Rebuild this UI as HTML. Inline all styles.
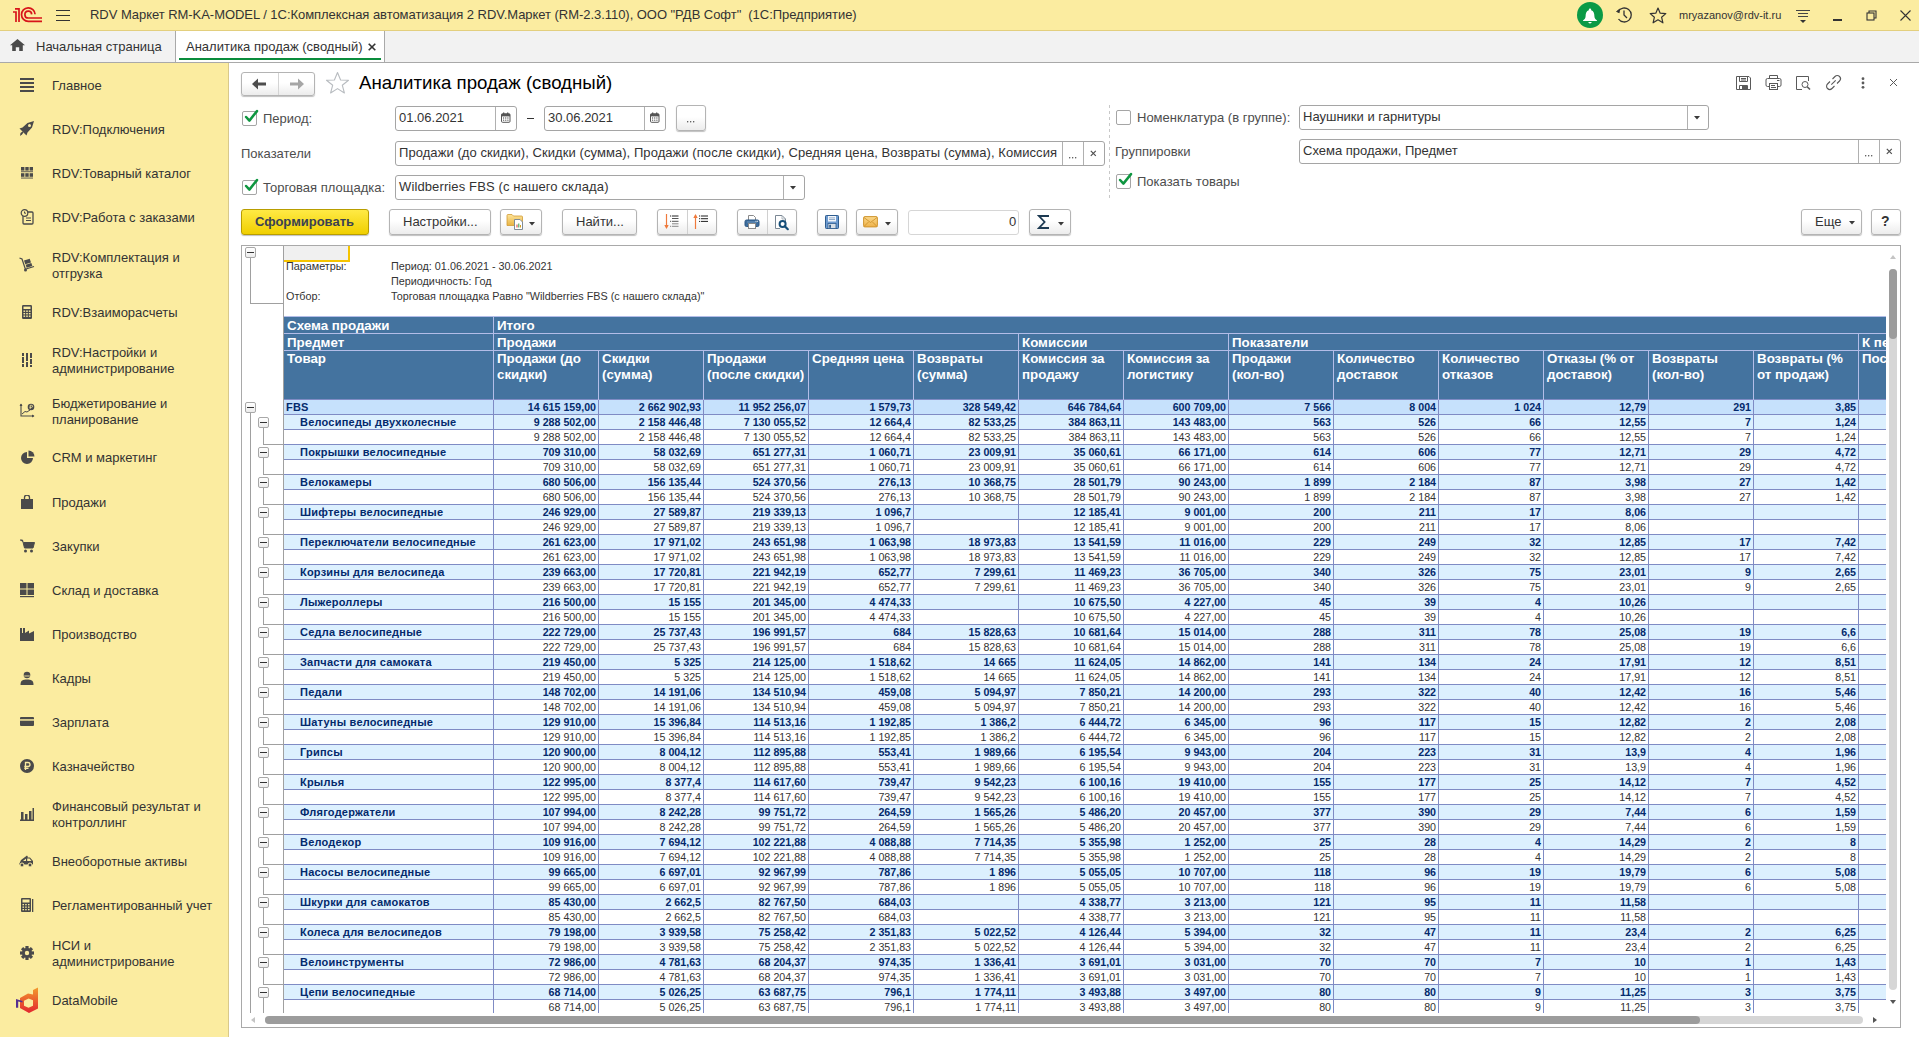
<!DOCTYPE html><html><head><meta charset="utf-8"><style>
*{box-sizing:border-box;margin:0;padding:0}
html,body{width:1919px;height:1037px;overflow:hidden;background:#fff;font-family:"Liberation Sans",sans-serif;color:#333;font-size:13px}
.a{position:absolute}
.t{position:absolute;white-space:pre;line-height:16px}
#titlebar{left:0;top:0;width:1919px;height:31px;background:#fbeca0;border-bottom:1px solid #e3cf7e}
#tabbar{left:0;top:31px;width:1919px;height:32px;background:#f2f2f2;border-bottom:1px solid #a9a9a9}
#sidebar{left:0;top:63px;width:229px;height:974px;background:#fbeca0;border-right:1px solid #d9c98a}
.si{position:absolute;left:52px;font-size:13px;color:#333;line-height:16px;white-space:pre}
.ico{position:absolute}
.fld{position:absolute;border:1px solid #a5a5a5;border-radius:3px;background:#fff}
.btn{position:absolute;border:1px solid #b4b4b4;border-radius:3px;background:linear-gradient(#fff 45%,#ececec);box-shadow:0 1px 1px rgba(0,0,0,.25)}
.cb{position:absolute;width:15px;height:15px;border:1px solid #a5a5a5;border-radius:2px;background:#fff}
.lbl{position:absolute;font-size:13px;color:#4d4d4d;white-space:pre;line-height:16px}
</style></head><body><div id="titlebar" class="a"></div><svg class="a" style="left:0px;top:0px" width="50" height="30" viewBox="0 0 50 30">
<g fill="none" stroke="#d7141a" stroke-width="1.7">
<path d="M13 12 H16 V22"/>
<path d="M15 8.8 H19 V22"/>
<path d="M35.1 14.2 A6.8 6.8 0 1 0 28.3 21.4 H42"/>
<path d="M31.7 14.4 A3.4 3.4 0 1 0 28.3 18 H42"/>
</g></svg><div class="a" style="left:56px;top:10px;width:14px;height:1.4px;background:#333"></div><div class="a" style="left:56px;top:15px;width:14px;height:1.4px;background:#333"></div><div class="a" style="left:56px;top:20px;width:14px;height:1.4px;background:#333"></div><div class="t" style="left:90px;top:7px;font-size:13px;letter-spacing:-0.045px;color:#333">RDV Маркет RM-KA-MODEL / 1С:Комплексная автоматизация 2 RDV.Маркет (RM-2.3.110), ООО "РДВ Софт"  (1С:Предприятие)</div><svg class="a" style="left:1577px;top:2px" width="26" height="26" viewBox="0 0 26 26"><circle cx="13" cy="13" r="13" fill="#0a9a46"/>
<path d="M13 6.5 a1.2 1.2 0 0 1 1.2 1.2 v0.5 c2.5 0.8 3.2 3 3.2 6 c0 2.5 1.6 3.5 2.6 4.2 v0.6 h-14 v-0.6 c1 -0.7 2.6 -1.7 2.6 -4.2 c0 -3 0.7 -5.2 3.2 -6 v-0.5 a1.2 1.2 0 0 1 1.2 -1.2z M11.3 20 h3.4 a1.7 1.5 0 0 1 -3.4 0z" fill="#fff"/></svg><svg class="a" style="left:1615px;top:6px" width="18" height="18" viewBox="0 0 18 18" fill="none" stroke="#333" stroke-width="1.3">
<path d="M3.2 5.5 A7 7 0 1 1 3.5 13"/><path d="M9 4.5 V9 L12 12"/><path d="M1.5 5.5 L4.5 3.2 L4.2 6.8z" fill="#333" stroke-width="0.8"/></svg><svg class="a" style="left:1649px;top:7px" width="18" height="17" viewBox="0 0 18 17"><path d="M9 1 L11.2 6.2 L16.8 6.6 L12.6 10.2 L13.9 15.8 L9 12.8 L4.1 15.8 L5.4 10.2 L1.2 6.6 L6.8 6.2z" fill="none" stroke="#333" stroke-width="1.2" stroke-linejoin="round"/></svg><div class="t" style="left:1679px;top:7px;font-size:11px;color:#333">mryazanov@rdv-it.ru</div><div class="a" style="left:1796px;top:10px;width:14px;height:1px;background:#444"></div><div class="a" style="left:1798px;top:13px;width:10px;height:1px;background:#444"></div><div class="a" style="left:1798px;top:16px;width:10px;height:1px;background:#444"></div><svg class="a" style="left:1800px;top:20px" width="6" height="3" viewBox="0 0 6 3"><path d="M0 0 H6 L3 3z" fill="#333"/></svg><div class="a" style="left:1833px;top:19px;width:9px;height:1.5px;background:#333"></div><svg class="a" style="left:1866px;top:10px" width="11" height="11" viewBox="0 0 11 11" fill="none" stroke="#333" stroke-width="1.1"><rect x="1" y="3" width="7" height="7"/><path d="M3 3 V1 H10 V8 H8"/></svg><svg class="a" style="left:1900px;top:10px" width="11" height="11" viewBox="0 0 11 11" fill="none" stroke="#333" stroke-width="1.1"><path d="M0.5 0.5 L10.5 10.5 M10.5 0.5 L0.5 10.5"/></svg><div id="tabbar" class="a"></div><svg class="a" style="left:10px;top:39px" width="15" height="12" viewBox="0 0 15 12"><path d="M7.5 0 L15 6.3 H12.8 V12 H9.2 V8.3 H5.8 V12 H2.2 V6.3 H0z" fill="#4a4a4a"/></svg><div class="t" style="left:36px;top:39px;font-size:13px;color:#333">Начальная страница</div><div class="a" style="left:175px;top:31px;width:210px;height:31px;background:#fff;border-left:1px solid #a9a9a9;border-right:1px solid #a9a9a9"></div><div class="t" style="left:186px;top:39px;font-size:13px;color:#333">Аналитика продаж (сводный)</div><svg class="a" style="left:368px;top:43px" width="8" height="8" viewBox="0 0 8 8"><path d="M0.7 0.7 L7.3 7.3 M7.3 0.7 L0.7 7.3" stroke="#333" stroke-width="1.6"/></svg><div class="a" style="left:179px;top:58px;width:202px;height:2px;background:#0a8c3c"></div><div id="sidebar" class="a"></div><div class="si" style="top:78px">Главное</div><svg class="a" style="left:20px;top:78px" width="16" height="16" viewBox="0 0 16 16"><rect x="0" y="0" width="14" height="2" fill="#4a4a4a"/><rect x="0" y="4" width="14" height="2" fill="#4a4a4a"/><rect x="0" y="8" width="14" height="2" fill="#4a4a4a"/><rect x="0" y="12" width="14" height="2" fill="#4a4a4a"/></svg><div class="si" style="top:122px">RDV:Подключения</div><svg class="a" style="left:19px;top:121px" width="16" height="16" viewBox="0 0 16 16"><path d="M15 0 L8.5 2 L3.5 6.5 L0.5 7.5 L2.5 9.5 L5.5 12.5 L7.5 14.5 L8.5 11.5 L13 6.5z" fill="#4a4a4a"/><circle cx="10.5" cy="4.5" r="1.5" fill="#fbeca0"/><path d="M1.5 12 L3.5 10.5 L4.5 11.5 L3 13.5 L1 15z" fill="#4a4a4a"/></svg><div class="si" style="top:166px">RDV:Товарный каталог</div><svg class="a" style="left:20px;top:166px" width="16" height="16" viewBox="0 0 16 16"><g fill="#4a4a4a"><rect x="1" y="1" width="3.4" height="3.6"/><rect x="5.3" y="1" width="3.4" height="3.6"/><rect x="9.6" y="1" width="3.4" height="3.6"/><rect x="1" y="5.3" width="12" height="0.9"/><rect x="1" y="7.2" width="3.4" height="3.6"/><rect x="5.3" y="7.2" width="3.4" height="3.6"/><rect x="9.6" y="7.2" width="3.4" height="3.6"/><rect x="1" y="11.6" width="12" height="0.9"/></g></svg><div class="si" style="top:210px">RDV:Работа с заказами</div><svg class="a" style="left:20px;top:209px" width="16" height="16" viewBox="0 0 16 16"><rect x="3" y="3" width="10" height="12" rx="1" fill="none" stroke="#4a4a4a" stroke-width="1.3"/><circle cx="4.5" cy="4" r="3.3" fill="#fbeca0" stroke="#4a4a4a" stroke-width="1.2"/><path d="M4.5 2.5 V4.2 H6" stroke="#4a4a4a" fill="none"/><path d="M6 9 H11 M6 11.5 H11" stroke="#4a4a4a" stroke-width="1"/></svg><div class="si" style="top:250px">RDV:Комплектация и
отгрузка</div><svg class="a" style="left:19px;top:257px" width="16" height="16" viewBox="0 0 16 16"><path d="M0.5 1 L3 2 L6.5 12.5" fill="none" stroke="#4a4a4a" stroke-width="1.2"/><circle cx="6.5" cy="13" r="1.5" fill="#4a4a4a"/><path d="M7 12 L15 9.5" stroke="#4a4a4a" stroke-width="1.3"/><rect x="5.5" y="2.5" width="6" height="4" transform="rotate(-18 8.5 4.5)" fill="#4a4a4a"/><rect x="7" y="6.8" width="6" height="3.2" transform="rotate(-18 10 8.4)" fill="#4a4a4a"/></svg><div class="si" style="top:305px">RDV:Взаиморасчеты</div><svg class="a" style="left:20px;top:305px" width="16" height="16" viewBox="0 0 16 16"><rect x="2" y="0" width="10" height="14" rx="1.2" fill="#4a4a4a"/><rect x="3.5" y="1.6" width="7" height="2.4" fill="#fbeca0"/><g fill="#fbeca0"><rect x="3.5" y="5.5" width="1.6" height="1.4"/><rect x="6.2" y="5.5" width="1.6" height="1.4"/><rect x="8.9" y="5.5" width="1.6" height="1.4"/><rect x="3.5" y="8" width="1.6" height="1.4"/><rect x="6.2" y="8" width="1.6" height="1.4"/><rect x="8.9" y="8" width="1.6" height="1.4"/><rect x="3.5" y="10.5" width="1.6" height="1.4"/><rect x="6.2" y="10.5" width="1.6" height="1.4"/><rect x="8.9" y="10.5" width="1.6" height="1.4"/></g></svg><div class="si" style="top:345px">RDV:Настройки и
администрирование</div><svg class="a" style="left:20px;top:353px" width="16" height="16" viewBox="0 0 16 16"><g fill="#4a4a4a"><rect x="2" y="0" width="2" height="14"/><rect x="6" y="0" width="2" height="14"/><rect x="10" y="0" width="2" height="14"/></g><g fill="#fbeca0"><rect x="2" y="3" width="2" height="1"/><rect x="6" y="8" width="2" height="1"/><rect x="10" y="5" width="2" height="1"/><rect x="2" y="10" width="2" height="1"/><rect x="10" y="11" width="2" height="1"/></g></svg><div class="si" style="top:396px">Бюджетирование и
планирование</div><svg class="a" style="left:19px;top:403px" width="16" height="16" viewBox="0 0 16 16"><path d="M2 1 V13 H15" fill="none" stroke="#4a4a4a" stroke-width="1.1"/><path d="M0.5 3 L2 0.5 L3.5 3z M13 11.5 L15.5 13 L13 14.5z" fill="#4a4a4a"/><path d="M3 11 L6 8.5 L8 9 L11 7" fill="none" stroke="#4a4a4a" stroke-width="1"/><circle cx="12" cy="4" r="3.3" fill="#4a4a4a"/><path d="M11.2 6 V2.3 H12.6 A1 1 0 0 1 12.6 4.3 H10.5" stroke="#fbeca0" stroke-width="0.8" fill="none"/></svg><div class="si" style="top:450px">CRM и маркетинг</div><svg class="a" style="left:20px;top:450px" width="16" height="16" viewBox="0 0 16 16"><path d="M7 2 A6 6 0 1 0 13 8 H7z" fill="#4a4a4a"/><path d="M8.5 0.5 A6 6 0 0 1 14.5 6.5 H8.5z" fill="#4a4a4a"/></svg><div class="si" style="top:495px">Продажи</div><svg class="a" style="left:20px;top:495px" width="16" height="16" viewBox="0 0 16 16"><path d="M1 4 H13 L13 14 H1z" fill="#4a4a4a"/><path d="M4.5 5 V2.5 A2.5 2.5 0 0 1 9.5 2.5 V5" fill="none" stroke="#4a4a4a" stroke-width="1.3"/></svg><div class="si" style="top:539px">Закупки</div><svg class="a" style="left:20px;top:539px" width="16" height="16" viewBox="0 0 16 16"><path d="M0 1 H2.5 L4.5 9 H13 L14.5 3.5 H3.5" fill="#4a4a4a" stroke="#4a4a4a" stroke-width="1"/><circle cx="5.5" cy="12" r="1.5" fill="#4a4a4a"/><circle cx="11.5" cy="12" r="1.5" fill="#4a4a4a"/></svg><div class="si" style="top:583px">Склад и доставка</div><svg class="a" style="left:20px;top:583px" width="16" height="16" viewBox="0 0 16 16"><g fill="#4a4a4a"><rect x="0" y="0" width="6.5" height="5.5"/><rect x="7.5" y="0" width="6.5" height="5.5"/><rect x="0" y="6.5" width="6.5" height="5.5"/><rect x="7.5" y="6.5" width="6.5" height="5.5"/><rect x="0" y="13" width="14" height="1.2"/></g></svg><div class="si" style="top:627px">Производство</div><svg class="a" style="left:20px;top:627px" width="16" height="16" viewBox="0 0 16 16"><path d="M0 14 V1 H2 V6 H3 V1 H5 V6 L9 3.5 V6.5 L14 4 V14z" fill="#4a4a4a"/></svg><div class="si" style="top:671px">Кадры</div><svg class="a" style="left:20px;top:671px" width="16" height="16" viewBox="0 0 16 16"><circle cx="7" cy="4" r="3.3" fill="#4a4a4a"/><path d="M4.2 5 H9.8" stroke="#fbeca0" stroke-width="0.9"/><path d="M0.5 14 C0.5 9 3 8.5 7 8.5 C11 8.5 13.5 9 13.5 14z" fill="#4a4a4a"/></svg><div class="si" style="top:715px">Зарплата</div><svg class="a" style="left:20px;top:715px" width="16" height="16" viewBox="0 0 16 16"><rect x="0" y="2" width="14" height="9" rx="1" fill="#4a4a4a"/><rect x="0" y="4.2" width="14" height="1.5" fill="#fbeca0"/></svg><div class="si" style="top:759px">Казначейство</div><svg class="a" style="left:20px;top:759px" width="16" height="16" viewBox="0 0 16 16"><circle cx="7" cy="7" r="7" fill="#4a4a4a"/><path d="M5.5 11 V3.5 H8 A2 2 0 0 1 8 7.5 H4.3 M4.3 9.3 H8.5" stroke="#fbeca0" stroke-width="1.3" fill="none"/></svg><div class="si" style="top:799px">Финансовый результат и
контроллинг</div><svg class="a" style="left:20px;top:807px" width="16" height="16" viewBox="0 0 16 16"><g fill="#4a4a4a"><rect x="0" y="12.5" width="14" height="1.5"/><rect x="1" y="5" width="2.5" height="8"/><rect x="5" y="7" width="2.5" height="6"/><rect x="9" y="4" width="2.5" height="9"/><rect x="12.5" y="1" width="1.5" height="12"/></g></svg><div class="si" style="top:854px">Внеоборотные активы</div><svg class="a" style="left:19px;top:854px" width="16" height="16" viewBox="0 0 16 16"><path d="M0 10.5 L2 6 L8 1.5 L9 3 L4 7 H7 V3.5 H11 L14 7 V10.5z" fill="#4a4a4a"/><circle cx="3" cy="11" r="2" fill="#4a4a4a" stroke="#fbeca0"/><circle cx="11" cy="11" r="2" fill="#4a4a4a" stroke="#fbeca0"/><path d="M8.2 4.5 H10.5 L12.5 7 H8.2z" fill="#fbeca0"/></svg><div class="si" style="top:898px">Регламентированный учет</div><svg class="a" style="left:20px;top:898px" width="16" height="16" viewBox="0 0 16 16"><rect x="1" y="0" width="10" height="14" rx="1" fill="#4a4a4a"/><rect x="12" y="1" width="1.3" height="13" fill="#4a4a4a"/><rect x="2.5" y="1.5" width="7" height="3" fill="#fbeca0"/><g fill="#fbeca0"><rect x="2.5" y="6" width="1.5" height="1.3"/><rect x="5.2" y="6" width="1.5" height="1.3"/><rect x="8" y="6" width="1.5" height="1.3"/><rect x="2.5" y="8.5" width="1.5" height="1.3"/><rect x="5.2" y="8.5" width="1.5" height="1.3"/><rect x="8" y="8.5" width="1.5" height="1.3"/><rect x="2.5" y="11" width="1.5" height="1.3"/><rect x="5.2" y="11" width="1.5" height="1.3"/><rect x="8" y="11" width="1.5" height="1.3"/></g></svg><div class="si" style="top:938px">НСИ и
администрирование</div><svg class="a" style="left:20px;top:946px" width="16" height="16" viewBox="0 0 16 16"><g transform="translate(7 7)" fill="#4a4a4a"><circle r="5"/><g id="gt"><rect x="-1.6" y="-7" width="3.2" height="14"/></g><rect x="-1.6" y="-7" width="3.2" height="14" transform="rotate(45)"/><rect x="-1.6" y="-7" width="3.2" height="14" transform="rotate(90)"/><rect x="-1.6" y="-7" width="3.2" height="14" transform="rotate(135)"/><circle r="2.2" fill="#fbeca0"/></g></svg><div class="si" style="top:993px">DataMobile</div><svg class="a" style="left:14px;top:986px" width="26" height="28" viewBox="0 0 26 28"><defs><linearGradient id="dmg" x1="0" y1="0" x2="0" y2="1"><stop offset="0" stop-color="#f39a2c"/><stop offset="1" stop-color="#e2262f"/></linearGradient></defs>
<path d="M19 4 L24 1.5 V22.5 L15 27 L6 22 V12 L14 7.4 L19 8.6z M10 14.8 V19.8 L14.5 21.8 L19 19.8 V14.3 L14.6 12.6z" fill="url(#dmg)" fill-rule="evenodd"/><path d="M2 13 L8.5 15 V16.6 L4.2 15.6 V21.7 H2z" fill="#55308f"/></svg><div class="btn" style="left:241px;top:72px;width:74px;height:24px"></div><div class="a" style="left:278px;top:73px;width:1px;height:22px;background:#d4d4d4"></div><svg class="a" style="left:252px;top:78px" width="15" height="12" viewBox="0 0 15 12"><path d="M0 6 L6 0.5 V4.5 H14 V7.5 H6 V11.5z" fill="#4d4d4d"/></svg><svg class="a" style="left:289px;top:78px" width="15" height="12" viewBox="0 0 15 12"><path d="M15 6 L9 0.5 V4.5 H1 V7.5 H9 V11.5z" fill="#a6a6a6"/></svg><svg class="a" style="left:325px;top:71px" width="25" height="24" viewBox="0 0 25 24"><path d="M12.5 1.5 L15.6 9 L23.5 9.2 L17.3 14.2 L19.4 22 L12.5 17.6 L5.6 22 L7.7 14.2 L1.5 9.2 L9.4 9z" fill="none" stroke="#b8bcc0" stroke-width="1.1" stroke-linejoin="round"/></svg><div class="t" style="left:359px;top:72px;font-size:18.67px;line-height:22px;color:#000">Аналитика продаж (сводный)</div><svg class="a" style="left:1735px;top:75px" width="17" height="16" viewBox="0 0 17 16" fill="none" stroke="#5a5a5a" stroke-width="1"><path d="M1.5 1.5 H14 L15.5 3 V14.5 H1.5z"/><path d="M4.5 1.5 V6.5 H12.5 V1.5 M6 3.5 H11 M6 5 H11"/><path d="M4.5 14.5 V10.5 H12.5 V14.5"/><rect x="7" y="11" width="5" height="3.5" fill="#5a5a5a" stroke="none"/></svg><svg class="a" style="left:1765px;top:74px" width="18" height="17" viewBox="0 0 18 17" fill="none" stroke="#5a5a5a" stroke-width="1"><path d="M4.5 4.5 V1.5 H12.5 V4.5"/><path d="M4 12.5 H2.5 A1.5 1.5 0 0 1 1 11 V6 A1.5 1.5 0 0 1 2.5 4.5 H14.5 A1.5 1.5 0 0 1 16 6 V11 A1.5 1.5 0 0 1 14.5 12.5 H13"/><rect x="4.5" y="9.5" width="8" height="6"/><path d="M6 11.5 H10 M6 13.5 H11 M12 6.5 H14.5"/></svg><svg class="a" style="left:1795px;top:75px" width="17" height="16" viewBox="0 0 17 16" fill="none" stroke="#5a5a5a" stroke-width="1"><path d="M7 14.5 H1.5 V1.5 H13.5 V6"/><circle cx="10" cy="9.5" r="3"/><path d="M12.2 11.7 L15 14.5" stroke-width="1.6"/></svg><svg class="a" style="left:1825px;top:74px" width="17" height="17" viewBox="0 0 17 17" fill="none" stroke="#5a5a5a" stroke-width="1.1"><path d="M7.5 5 L10 2.5 A3 3 0 0 1 14.5 7 L12 9.5"/><path d="M9.5 12 L7 14.5 A3 3 0 0 1 2.5 10 L5 7.5"/><path d="M6.3 10.7 L10.7 6.3"/></svg><svg class="a" style="left:1861px;top:77px" width="4" height="12" viewBox="0 0 4 12"><circle cx="2" cy="1.7" r="1.4" fill="#5a5a5a"/><circle cx="2" cy="6" r="1.4" fill="#5a5a5a"/><circle cx="2" cy="10.3" r="1.4" fill="#5a5a5a"/></svg><svg class="a" style="left:1889px;top:78px" width="9" height="9" viewBox="0 0 9 9"><path d="M1 1 L8 8 M8 1 L1 8" stroke="#5a5a5a" stroke-width="1"/></svg><div class="cb" style="left:242px;top:111px"></div><svg class="a" style="left:244px;top:107px" width="16" height="15" viewBox="0 0 16 15"><path d="M2.1 10 L5.4 13.6 L13 4.1" fill="none" stroke="#0e9640" stroke-width="2.5" stroke-linecap="round" stroke-linejoin="round"/></svg><div class="lbl" style="left:263px;top:111px">Период:</div><div class="fld" style="left:395px;top:106px;width:122px;height:25px"></div><div class="a" style="left:495px;top:107px;width:1px;height:23px;background:#b0b0b0"></div><svg class="a" style="left:501px;top:112px" width="10" height="11" viewBox="0 0 10 11"><rect x="0.5" y="1.8" width="8.5" height="8.5" rx="1" fill="#fff" stroke="#555" stroke-width="1"/><rect x="0.5" y="1.8" width="8.5" height="2.6" fill="#555"/><rect x="2" y="0.5" width="1.3" height="2.2" fill="#555"/><rect x="6" y="0.5" width="1.3" height="2.2" fill="#555"/><g fill="#555"><circle cx="2.6" cy="6" r="0.65"/><circle cx="4.75" cy="6" r="0.65"/><circle cx="6.9" cy="6" r="0.65"/><circle cx="2.6" cy="8.2" r="0.65"/><circle cx="4.75" cy="8.2" r="0.65"/><circle cx="6.9" cy="8.2" r="0.65"/></g></svg><div class="t" style="left:399px;top:110px;color:#333">01.06.2021</div><div class="a" style="left:527px;top:118px;width:7px;height:1px;background:#333"></div><div class="fld" style="left:544px;top:106px;width:122px;height:25px"></div><div class="a" style="left:644px;top:107px;width:1px;height:23px;background:#b0b0b0"></div><svg class="a" style="left:650px;top:112px" width="10" height="11" viewBox="0 0 10 11"><rect x="0.5" y="1.8" width="8.5" height="8.5" rx="1" fill="#fff" stroke="#555" stroke-width="1"/><rect x="0.5" y="1.8" width="8.5" height="2.6" fill="#555"/><rect x="2" y="0.5" width="1.3" height="2.2" fill="#555"/><rect x="6" y="0.5" width="1.3" height="2.2" fill="#555"/><g fill="#555"><circle cx="2.6" cy="6" r="0.65"/><circle cx="4.75" cy="6" r="0.65"/><circle cx="6.9" cy="6" r="0.65"/><circle cx="2.6" cy="8.2" r="0.65"/><circle cx="4.75" cy="8.2" r="0.65"/><circle cx="6.9" cy="8.2" r="0.65"/></g></svg><div class="t" style="left:548px;top:110px;color:#333">30.06.2021</div><div class="btn" style="left:676px;top:105px;width:30px;height:26px"></div><svg class="a" style="left:687px;top:121px" width="8" height="2" viewBox="0 0 8 2"><circle cx="0.7" cy="0.7" r="0.7" fill="#444"/><circle cx="3.7" cy="0.7" r="0.7" fill="#444"/><circle cx="6.7" cy="0.7" r="0.7" fill="#444"/></svg><div class="lbl" style="left:241px;top:146px">Показатели</div><div class="fld" style="left:395px;top:141px;width:710px;height:25px"></div><div class="a" style="left:1062px;top:142px;width:1px;height:23px;background:#b0b0b0"></div><div class="a" style="left:1083px;top:142px;width:1px;height:23px;background:#b0b0b0"></div><div class="t" style="left:399px;top:145px;letter-spacing:0.065px;color:#333">Продажи (до скидки), Скидки (сумма), Продажи (после скидки), Средняя цена, Возвраты (сумма), Комиссия</div><svg class="a" style="left:1069px;top:157px" width="8" height="2" viewBox="0 0 8 2"><circle cx="0.7" cy="0.7" r="0.7" fill="#444"/><circle cx="3.7" cy="0.7" r="0.7" fill="#444"/><circle cx="6.7" cy="0.7" r="0.7" fill="#444"/></svg><svg class="a" style="left:1090px;top:150px" width="7" height="7" viewBox="0 0 7 7"><path d="M0.8 0.8 L5.8 5.8 M5.8 0.8 L0.8 5.8" stroke="#505050" stroke-width="1.2"/></svg><div class="cb" style="left:242px;top:180px"></div><svg class="a" style="left:244px;top:176px" width="16" height="15" viewBox="0 0 16 15"><path d="M2.1 10 L5.4 13.6 L13 4.1" fill="none" stroke="#0e9640" stroke-width="2.5" stroke-linecap="round" stroke-linejoin="round"/></svg><div class="lbl" style="left:263px;top:180px">Торговая площадка:</div><div class="fld" style="left:395px;top:175px;width:410px;height:25px"></div><div class="a" style="left:783px;top:176px;width:1px;height:23px;background:#b0b0b0"></div><svg class="a" style="left:790px;top:186px" width="6" height="3.5" viewBox="0 0 6 3.5"><path d="M0 0 H6 L3 3.5z" fill="#3a3a3a"/></svg><div class="t" style="left:399px;top:179px;letter-spacing:0.12px;color:#333">Wildberries FBS (с нашего склада)</div><svg class="a" style="left:1109px;top:105px" width="1" height="94" viewBox="0 0 1 94"><line x1="0.5" y1="0" x2="0.5" y2="94" stroke="#c8c8c8" stroke-dasharray="3 3"/></svg><div class="cb" style="left:1116px;top:110px"></div><div class="lbl" style="left:1137px;top:110px">Номенклатура (в группе):</div><div class="fld" style="left:1299px;top:105px;width:410px;height:25px"></div><div class="a" style="left:1687px;top:106px;width:1px;height:23px;background:#b0b0b0"></div><svg class="a" style="left:1694px;top:116px" width="6" height="3.5" viewBox="0 0 6 3.5"><path d="M0 0 H6 L3 3.5z" fill="#3a3a3a"/></svg><div class="t" style="left:1303px;top:109px;color:#333">Наушники и гарнитуры</div><div class="lbl" style="left:1115px;top:144px">Группировки</div><div class="fld" style="left:1299px;top:139px;width:602px;height:25px"></div><div class="a" style="left:1858px;top:140px;width:1px;height:23px;background:#b0b0b0"></div><div class="a" style="left:1879px;top:140px;width:1px;height:23px;background:#b0b0b0"></div><div class="t" style="left:1303px;top:143px;color:#333">Схема продажи, Предмет</div><svg class="a" style="left:1865px;top:155px" width="8" height="2" viewBox="0 0 8 2"><circle cx="0.7" cy="0.7" r="0.7" fill="#444"/><circle cx="3.7" cy="0.7" r="0.7" fill="#444"/><circle cx="6.7" cy="0.7" r="0.7" fill="#444"/></svg><svg class="a" style="left:1886px;top:148px" width="7" height="7" viewBox="0 0 7 7"><path d="M0.8 0.8 L5.8 5.8 M5.8 0.8 L0.8 5.8" stroke="#505050" stroke-width="1.2"/></svg><div class="cb" style="left:1116px;top:174px"></div><svg class="a" style="left:1118px;top:170px" width="16" height="15" viewBox="0 0 16 15"><path d="M2.1 10 L5.4 13.6 L13 4.1" fill="none" stroke="#0e9640" stroke-width="2.5" stroke-linecap="round" stroke-linejoin="round"/></svg><div class="lbl" style="left:1137px;top:174px">Показать товары</div><div class="a" style="left:241px;top:209px;width:128px;height:26px;border:1px solid #b89d00;border-radius:3px;background:linear-gradient(#ffea45,#f0cf00);box-shadow:0 1px 1px rgba(0,0,0,.25)"></div><div class="t" style="left:255px;top:214px;font-weight:bold;color:#3a4152">Сформировать</div><div class="btn" style="left:389px;top:209px;width:102px;height:26px"></div><div class="t" style="left:403px;top:214px;color:#333">Настройки...</div><div class="btn" style="left:500px;top:209px;width:42px;height:26px"></div><svg class="a" style="left:506px;top:213px" width="18" height="18" viewBox="0 0 18 18"><defs><linearGradient id="fg" x1="0" y1="0" x2="0" y2="1"><stop offset="0" stop-color="#fde49a"/><stop offset="1" stop-color="#e9b443"/></linearGradient></defs><path d="M1 2.5 Q1 1.5 2 1.5 H6 L7.5 3 H15.5 Q16.5 3 16.5 4 V12.5 H1z" fill="url(#fg)" stroke="#d19a35" stroke-width="0.8"/><path d="M8.5 6.5 H14 L16.5 9 V16.5 H8.5z" fill="#fff" stroke="#7f8b96" stroke-width="1"/><rect x="10.5" y="11.5" width="1" height="3" fill="#e23a2e"/><rect x="12.3" y="10.5" width="1" height="4" fill="#2fa04a"/><rect x="14" y="12" width="1" height="2.5" fill="#d6a01e"/></svg><svg class="a" style="left:529px;top:222px" width="6" height="3.5" viewBox="0 0 6 3.5"><path d="M0 0 H6 L3 3.5z" fill="#3a3a3a"/></svg><div class="btn" style="left:562px;top:209px;width:75px;height:26px"></div><div class="t" style="left:576px;top:214px;color:#333">Найти...</div><div class="btn" style="left:657px;top:209px;width:60px;height:26px"></div><div class="a" style="left:687px;top:210px;width:1px;height:24px;background:#d0d0d0"></div><svg class="a" style="left:664px;top:213px" width="18" height="17" viewBox="0 0 18 17"><path d="M2.5 1 V14" stroke="#ef7a3c" stroke-width="1.2"/><path d="M0.3 12 L2.5 16 L4.7 12z" fill="#ef7a3c"/><g fill="#222"><rect x="6" y="2.5" width="1.2" height="1"/><rect x="8" y="2.5" width="6.5" height="1"/></g><g fill="#555"><rect x="8" y="5" width="6.5" height="1"/><rect x="6" y="7.8" width="1.2" height="1"/><rect x="8" y="7.8" width="6.5" height="1"/></g><g fill="#888"><rect x="8" y="10.3" width="6.5" height="1"/><rect x="6" y="12.8" width="1.2" height="1"/><rect x="8" y="12.8" width="6.5" height="1"/></g></svg><svg class="a" style="left:693px;top:213px" width="18" height="17" viewBox="0 0 18 17"><path d="M2.5 2.5 V16" stroke="#ef7a3c" stroke-width="1.2"/><path d="M0.3 5 L2.5 1 L4.7 5z" fill="#ef7a3c"/><g fill="#222"><rect x="6" y="2.5" width="1.2" height="1"/><rect x="8" y="2.5" width="7" height="1"/><rect x="6" y="5.2" width="1.2" height="1"/><rect x="8" y="5.2" width="7" height="1"/><rect x="6" y="7.9" width="1.2" height="1"/><rect x="8" y="7.9" width="7" height="1"/></g></svg><div class="btn" style="left:737px;top:209px;width:60px;height:26px"></div><div class="a" style="left:767px;top:210px;width:1px;height:24px;background:#d0d0d0"></div><svg class="a" style="left:744px;top:214px" width="16" height="16" viewBox="0 0 16 16"><path d="M4.5 1.5 H9.5 L11.5 3.5 V7 H4.5z" fill="#fff" stroke="#8a8a8a" stroke-width="1"/><rect x="1" y="6" width="14" height="6.5" rx="1.5" fill="#3d6c9c" stroke="#2b5784" stroke-width="1"/><rect x="3" y="7.5" width="10" height="1" fill="#6f95bd"/><rect x="11.5" y="6.8" width="1" height="0.9" fill="#fff"/><rect x="13" y="6.8" width="1" height="0.9" fill="#fff"/><rect x="4.5" y="9.5" width="7" height="5" fill="#fff" stroke="#8a8a8a" stroke-width="1"/></svg><svg class="a" style="left:774px;top:214px" width="16" height="17" viewBox="0 0 16 17"><path d="M1.5 1.5 H8 L11.5 5 V8 M6 14.5 H1.5 V1.5" fill="#fff" stroke="#7a8794" stroke-width="1"/><path d="M8 1.5 V5 H11.5" fill="none" stroke="#9aa4ae" stroke-width="0.8"/><circle cx="8.6" cy="10" r="3" fill="#fff" stroke="#154e78" stroke-width="2"/><path d="M10.8 12.2 L13.8 15.2" stroke="#154e78" stroke-width="2.2" stroke-linecap="round"/></svg><div class="btn" style="left:817px;top:209px;width:30px;height:26px"></div><svg class="a" style="left:825px;top:215px" width="14" height="14" viewBox="0 0 14 14"><rect x="0.5" y="0.5" width="13" height="13" rx="0.8" fill="#6e9bd0" stroke="#2f5d8f" stroke-width="1"/><rect x="3" y="1" width="8" height="5.5" fill="#f4f7fb"/><rect x="4" y="2.5" width="6" height="0.8" fill="#7a99bd"/><rect x="4" y="4.2" width="6" height="0.8" fill="#7a99bd"/><rect x="3" y="8.5" width="8" height="5" fill="#d8dfe6" stroke="#2f5d8f" stroke-width="0.8"/><rect x="4.2" y="9.8" width="1.8" height="3" fill="#2f5d8f"/></svg><div class="btn" style="left:856px;top:209px;width:42px;height:26px"></div><svg class="a" style="left:863px;top:216px" width="15" height="12" viewBox="0 0 15 12"><defs><linearGradient id="mg" x1="0" y1="0" x2="0" y2="1"><stop offset="0" stop-color="#fbd88a"/><stop offset="1" stop-color="#eeb24a"/></linearGradient></defs><rect x="0.6" y="0.6" width="13.8" height="10.3" rx="1.2" fill="url(#mg)" stroke="#cf9530" stroke-width="1"/><path d="M1 1.5 L7.5 6.5 L14 1.5 M1 10.5 L5.5 6 M14 10.5 L9.5 6" fill="none" stroke="#c98d24" stroke-width="0.8"/></svg><svg class="a" style="left:885px;top:222px" width="6" height="3.5" viewBox="0 0 6 3.5"><path d="M0 0 H6 L3 3.5z" fill="#3a3a3a"/></svg><div class="a" style="left:908px;top:210px;width:111px;height:25px;border:1px solid #d6d6d6;border-radius:3px;background:#fff"></div><div class="t" style="left:1009px;top:214px;color:#333">0</div><div class="btn" style="left:1029px;top:209px;width:42px;height:26px"></div><svg class="a" style="left:1037px;top:214px" width="13" height="16" viewBox="0 0 13 16"><path d="M12 2 H2 L7.6 8 L2 14 H12" fill="none" stroke="#1d3a52" stroke-width="1.8" stroke-linejoin="miter"/></svg><svg class="a" style="left:1058px;top:222px" width="6" height="3.5" viewBox="0 0 6 3.5"><path d="M0 0 H6 L3 3.5z" fill="#3a3a3a"/></svg><div class="btn" style="left:1801px;top:209px;width:61px;height:26px"></div><div class="t" style="left:1815px;top:214px;color:#333">Еще</div><svg class="a" style="left:1849px;top:221px" width="6" height="3.5" viewBox="0 0 6 3.5"><path d="M0 0 H6 L3 3.5z" fill="#3a3a3a"/></svg><div class="btn" style="left:1871px;top:209px;width:30px;height:26px"></div><div class="t" style="left:1881px;top:213px;font-weight:bold;font-size:14px;color:#333">?</div><div class="a" style="left:241px;top:245px;width:660px;height:783px;border:1px solid #a9a9a9;width:1660px"></div><div class="a" style="left:242px;top:246px;width:1644px;height:767px;overflow:hidden"><div class="a" style="left:42px;top:0px;width:64px;height:14px;background:#f0f0f0;"></div><div class="a" style="left:42px;top:14px;width:66px;height:2px;background:#f5c400;"></div><div class="a" style="left:106px;top:0px;width:2px;height:16px;background:#f5c400;"></div><div class="t" style="left:44px;top:13px;font-size:10.8px;line-height:14px;font-weight:400;color:#333;">Параметры:</div><div class="t" style="left:149px;top:13px;font-size:10.8px;line-height:14px;font-weight:400;color:#333;">Период: 01.06.2021 - 30.06.2021</div><div class="t" style="left:149px;top:28px;font-size:10.8px;line-height:14px;font-weight:400;color:#333;">Периодичность: Год</div><div class="t" style="left:44px;top:43px;font-size:10.8px;line-height:14px;font-weight:400;color:#333;">Отбор:</div><div class="t" style="left:149px;top:43px;font-size:10.8px;line-height:14px;font-weight:400;color:#333;">Торговая площадка Равно &quot;Wildberries FBS (с нашего склада)&quot;</div><div class="a" style="left:41px;top:0px;width:1px;height:767px;background:#a0a0a0;"></div><div class="a" style="left:42px;top:70px;width:1602px;height:84px;background:#44739f;"></div><div class="a" style="left:42px;top:70px;width:1602px;height:1px;background:#b3bde8;"></div><div class="a" style="left:42px;top:87px;width:1602px;height:1px;background:#b3bde8;"></div><div class="a" style="left:42px;top:104px;width:1602px;height:1px;background:#b3bde8;"></div><div class="a" style="left:42px;top:153px;width:1602px;height:1px;background:#7f8bc4;"></div><div class="a" style="left:251px;top:70px;width:1px;height:84px;background:#b3bde8;"></div><div class="a" style="left:776px;top:87px;width:1px;height:67px;background:#b3bde8;"></div><div class="a" style="left:986px;top:87px;width:1px;height:67px;background:#b3bde8;"></div><div class="a" style="left:1616px;top:87px;width:1px;height:67px;background:#b3bde8;"></div><div class="a" style="left:356px;top:104px;width:1px;height:50px;background:#b3bde8;"></div><div class="a" style="left:461px;top:104px;width:1px;height:50px;background:#b3bde8;"></div><div class="a" style="left:566px;top:104px;width:1px;height:50px;background:#b3bde8;"></div><div class="a" style="left:671px;top:104px;width:1px;height:50px;background:#b3bde8;"></div><div class="a" style="left:776px;top:104px;width:1px;height:50px;background:#b3bde8;"></div><div class="a" style="left:881px;top:104px;width:1px;height:50px;background:#b3bde8;"></div><div class="a" style="left:986px;top:104px;width:1px;height:50px;background:#b3bde8;"></div><div class="a" style="left:1091px;top:104px;width:1px;height:50px;background:#b3bde8;"></div><div class="a" style="left:1196px;top:104px;width:1px;height:50px;background:#b3bde8;"></div><div class="a" style="left:1301px;top:104px;width:1px;height:50px;background:#b3bde8;"></div><div class="a" style="left:1406px;top:104px;width:1px;height:50px;background:#b3bde8;"></div><div class="a" style="left:1511px;top:104px;width:1px;height:50px;background:#b3bde8;"></div><div class="a" style="left:1616px;top:104px;width:1px;height:50px;background:#b3bde8;"></div><div class="a" style="left:1721px;top:104px;width:1px;height:50px;background:#b3bde8;"></div><div class="t" style="left:45px;top:72px;font-size:13.33px;line-height:16px;font-weight:700;color:#ffffff">Схема продажи</div><div class="t" style="left:255px;top:72px;font-size:13.33px;line-height:16px;font-weight:700;color:#ffffff">Итого</div><div class="t" style="left:45px;top:89px;font-size:13.33px;line-height:16px;font-weight:700;color:#ffffff">Предмет</div><div class="t" style="left:255px;top:89px;font-size:13.33px;line-height:16px;font-weight:700;color:#ffffff">Продажи</div><div class="t" style="left:780px;top:89px;font-size:13.33px;line-height:16px;font-weight:700;color:#ffffff">Комиссии</div><div class="t" style="left:990px;top:89px;font-size:13.33px;line-height:16px;font-weight:700;color:#ffffff">Показатели</div><div class="t" style="left:1620px;top:89px;font-size:13.33px;line-height:16px;font-weight:700;color:#ffffff">К переводу</div><div class="t" style="left:45px;top:105px;font-size:13.33px;line-height:16px;font-weight:700;color:#ffffff">Товар</div><div class="t" style="left:255px;top:105px;font-size:13.33px;line-height:16px;font-weight:700;color:#ffffff">Продажи (до
скидки)</div><div class="t" style="left:360px;top:105px;font-size:13.33px;line-height:16px;font-weight:700;color:#ffffff">Скидки
(сумма)</div><div class="t" style="left:465px;top:105px;font-size:13.33px;line-height:16px;font-weight:700;color:#ffffff">Продажи
(после скидки)</div><div class="t" style="left:570px;top:105px;font-size:13.33px;line-height:16px;font-weight:700;color:#ffffff">Средняя цена</div><div class="t" style="left:675px;top:105px;font-size:13.33px;line-height:16px;font-weight:700;color:#ffffff">Возвраты
(сумма)</div><div class="t" style="left:780px;top:105px;font-size:13.33px;line-height:16px;font-weight:700;color:#ffffff">Комиссия за
продажу</div><div class="t" style="left:885px;top:105px;font-size:13.33px;line-height:16px;font-weight:700;color:#ffffff">Комиссия за
логистику</div><div class="t" style="left:990px;top:105px;font-size:13.33px;line-height:16px;font-weight:700;color:#ffffff">Продажи
(кол-во)</div><div class="t" style="left:1095px;top:105px;font-size:13.33px;line-height:16px;font-weight:700;color:#ffffff">Количество
доставок</div><div class="t" style="left:1200px;top:105px;font-size:13.33px;line-height:16px;font-weight:700;color:#ffffff">Количество
отказов</div><div class="t" style="left:1305px;top:105px;font-size:13.33px;line-height:16px;font-weight:700;color:#ffffff">Отказы (% от
доставок)</div><div class="t" style="left:1410px;top:105px;font-size:13.33px;line-height:16px;font-weight:700;color:#ffffff">Возвраты
(кол-во)</div><div class="t" style="left:1515px;top:105px;font-size:13.33px;line-height:16px;font-weight:700;color:#ffffff">Возвраты (%
от продаж)</div><div class="t" style="left:1620px;top:105px;font-size:13.33px;line-height:16px;font-weight:700;color:#ffffff">Поступления</div><div class="a" style="left:42px;top:154px;width:1602px;height:14px;background:#c6e1fc;"></div><div class="a" style="left:42px;top:168px;width:1602px;height:1px;background:#7f8bc4;"></div><div class="t" style="left:44px;top:154px;font-size:11px;line-height:14px;font-weight:700;color:#042a6c;letter-spacing:0.22px">FBS</div><div class="t" style="left:251px;top:154px;width:103px;text-align:right;font-size:10.67px;line-height:14px;font-weight:700;color:#042a6c">14 615 159,00</div><div class="t" style="left:356px;top:154px;width:103px;text-align:right;font-size:10.67px;line-height:14px;font-weight:700;color:#042a6c">2 662 902,93</div><div class="t" style="left:461px;top:154px;width:103px;text-align:right;font-size:10.67px;line-height:14px;font-weight:700;color:#042a6c">11 952 256,07</div><div class="t" style="left:566px;top:154px;width:103px;text-align:right;font-size:10.67px;line-height:14px;font-weight:700;color:#042a6c">1 579,73</div><div class="t" style="left:671px;top:154px;width:103px;text-align:right;font-size:10.67px;line-height:14px;font-weight:700;color:#042a6c">328 549,42</div><div class="t" style="left:776px;top:154px;width:103px;text-align:right;font-size:10.67px;line-height:14px;font-weight:700;color:#042a6c">646 784,64</div><div class="t" style="left:881px;top:154px;width:103px;text-align:right;font-size:10.67px;line-height:14px;font-weight:700;color:#042a6c">600 709,00</div><div class="t" style="left:986px;top:154px;width:103px;text-align:right;font-size:10.67px;line-height:14px;font-weight:700;color:#042a6c">7 566</div><div class="t" style="left:1091px;top:154px;width:103px;text-align:right;font-size:10.67px;line-height:14px;font-weight:700;color:#042a6c">8 004</div><div class="t" style="left:1196px;top:154px;width:103px;text-align:right;font-size:10.67px;line-height:14px;font-weight:700;color:#042a6c">1 024</div><div class="t" style="left:1301px;top:154px;width:103px;text-align:right;font-size:10.67px;line-height:14px;font-weight:700;color:#042a6c">12,79</div><div class="t" style="left:1406px;top:154px;width:103px;text-align:right;font-size:10.67px;line-height:14px;font-weight:700;color:#042a6c">291</div><div class="t" style="left:1511px;top:154px;width:103px;text-align:right;font-size:10.67px;line-height:14px;font-weight:700;color:#042a6c">3,85</div><div class="a" style="left:42px;top:169px;width:1602px;height:14px;background:#dcf0fe;"></div><div class="a" style="left:42px;top:183px;width:1602px;height:1px;background:#7f8bc4;"></div><div class="t" style="left:58px;top:169px;font-size:11px;line-height:14px;font-weight:700;color:#042a6c;letter-spacing:0.22px">Велосипеды двухколесные</div><div class="t" style="left:251px;top:169px;width:103px;text-align:right;font-size:10.67px;line-height:14px;font-weight:700;color:#042a6c">9 288 502,00</div><div class="t" style="left:356px;top:169px;width:103px;text-align:right;font-size:10.67px;line-height:14px;font-weight:700;color:#042a6c">2 158 446,48</div><div class="t" style="left:461px;top:169px;width:103px;text-align:right;font-size:10.67px;line-height:14px;font-weight:700;color:#042a6c">7 130 055,52</div><div class="t" style="left:566px;top:169px;width:103px;text-align:right;font-size:10.67px;line-height:14px;font-weight:700;color:#042a6c">12 664,4</div><div class="t" style="left:671px;top:169px;width:103px;text-align:right;font-size:10.67px;line-height:14px;font-weight:700;color:#042a6c">82 533,25</div><div class="t" style="left:776px;top:169px;width:103px;text-align:right;font-size:10.67px;line-height:14px;font-weight:700;color:#042a6c">384 863,11</div><div class="t" style="left:881px;top:169px;width:103px;text-align:right;font-size:10.67px;line-height:14px;font-weight:700;color:#042a6c">143 483,00</div><div class="t" style="left:986px;top:169px;width:103px;text-align:right;font-size:10.67px;line-height:14px;font-weight:700;color:#042a6c">563</div><div class="t" style="left:1091px;top:169px;width:103px;text-align:right;font-size:10.67px;line-height:14px;font-weight:700;color:#042a6c">526</div><div class="t" style="left:1196px;top:169px;width:103px;text-align:right;font-size:10.67px;line-height:14px;font-weight:700;color:#042a6c">66</div><div class="t" style="left:1301px;top:169px;width:103px;text-align:right;font-size:10.67px;line-height:14px;font-weight:700;color:#042a6c">12,55</div><div class="t" style="left:1406px;top:169px;width:103px;text-align:right;font-size:10.67px;line-height:14px;font-weight:700;color:#042a6c">7</div><div class="t" style="left:1511px;top:169px;width:103px;text-align:right;font-size:10.67px;line-height:14px;font-weight:700;color:#042a6c">1,24</div><div class="a" style="left:42px;top:198px;width:1602px;height:1px;background:#7f8bc4;"></div><div class="t" style="left:251px;top:184px;width:103px;text-align:right;font-size:10.67px;line-height:14px;font-weight:400;color:#333">9 288 502,00</div><div class="t" style="left:356px;top:184px;width:103px;text-align:right;font-size:10.67px;line-height:14px;font-weight:400;color:#333">2 158 446,48</div><div class="t" style="left:461px;top:184px;width:103px;text-align:right;font-size:10.67px;line-height:14px;font-weight:400;color:#333">7 130 055,52</div><div class="t" style="left:566px;top:184px;width:103px;text-align:right;font-size:10.67px;line-height:14px;font-weight:400;color:#333">12 664,4</div><div class="t" style="left:671px;top:184px;width:103px;text-align:right;font-size:10.67px;line-height:14px;font-weight:400;color:#333">82 533,25</div><div class="t" style="left:776px;top:184px;width:103px;text-align:right;font-size:10.67px;line-height:14px;font-weight:400;color:#333">384 863,11</div><div class="t" style="left:881px;top:184px;width:103px;text-align:right;font-size:10.67px;line-height:14px;font-weight:400;color:#333">143 483,00</div><div class="t" style="left:986px;top:184px;width:103px;text-align:right;font-size:10.67px;line-height:14px;font-weight:400;color:#333">563</div><div class="t" style="left:1091px;top:184px;width:103px;text-align:right;font-size:10.67px;line-height:14px;font-weight:400;color:#333">526</div><div class="t" style="left:1196px;top:184px;width:103px;text-align:right;font-size:10.67px;line-height:14px;font-weight:400;color:#333">66</div><div class="t" style="left:1301px;top:184px;width:103px;text-align:right;font-size:10.67px;line-height:14px;font-weight:400;color:#333">12,55</div><div class="t" style="left:1406px;top:184px;width:103px;text-align:right;font-size:10.67px;line-height:14px;font-weight:400;color:#333">7</div><div class="t" style="left:1511px;top:184px;width:103px;text-align:right;font-size:10.67px;line-height:14px;font-weight:400;color:#333">1,24</div><div class="a" style="left:42px;top:199px;width:1602px;height:14px;background:#dcf0fe;"></div><div class="a" style="left:42px;top:213px;width:1602px;height:1px;background:#7f8bc4;"></div><div class="t" style="left:58px;top:199px;font-size:11px;line-height:14px;font-weight:700;color:#042a6c;letter-spacing:0.22px">Покрышки велосипедные</div><div class="t" style="left:251px;top:199px;width:103px;text-align:right;font-size:10.67px;line-height:14px;font-weight:700;color:#042a6c">709 310,00</div><div class="t" style="left:356px;top:199px;width:103px;text-align:right;font-size:10.67px;line-height:14px;font-weight:700;color:#042a6c">58 032,69</div><div class="t" style="left:461px;top:199px;width:103px;text-align:right;font-size:10.67px;line-height:14px;font-weight:700;color:#042a6c">651 277,31</div><div class="t" style="left:566px;top:199px;width:103px;text-align:right;font-size:10.67px;line-height:14px;font-weight:700;color:#042a6c">1 060,71</div><div class="t" style="left:671px;top:199px;width:103px;text-align:right;font-size:10.67px;line-height:14px;font-weight:700;color:#042a6c">23 009,91</div><div class="t" style="left:776px;top:199px;width:103px;text-align:right;font-size:10.67px;line-height:14px;font-weight:700;color:#042a6c">35 060,61</div><div class="t" style="left:881px;top:199px;width:103px;text-align:right;font-size:10.67px;line-height:14px;font-weight:700;color:#042a6c">66 171,00</div><div class="t" style="left:986px;top:199px;width:103px;text-align:right;font-size:10.67px;line-height:14px;font-weight:700;color:#042a6c">614</div><div class="t" style="left:1091px;top:199px;width:103px;text-align:right;font-size:10.67px;line-height:14px;font-weight:700;color:#042a6c">606</div><div class="t" style="left:1196px;top:199px;width:103px;text-align:right;font-size:10.67px;line-height:14px;font-weight:700;color:#042a6c">77</div><div class="t" style="left:1301px;top:199px;width:103px;text-align:right;font-size:10.67px;line-height:14px;font-weight:700;color:#042a6c">12,71</div><div class="t" style="left:1406px;top:199px;width:103px;text-align:right;font-size:10.67px;line-height:14px;font-weight:700;color:#042a6c">29</div><div class="t" style="left:1511px;top:199px;width:103px;text-align:right;font-size:10.67px;line-height:14px;font-weight:700;color:#042a6c">4,72</div><div class="a" style="left:42px;top:228px;width:1602px;height:1px;background:#7f8bc4;"></div><div class="t" style="left:251px;top:214px;width:103px;text-align:right;font-size:10.67px;line-height:14px;font-weight:400;color:#333">709 310,00</div><div class="t" style="left:356px;top:214px;width:103px;text-align:right;font-size:10.67px;line-height:14px;font-weight:400;color:#333">58 032,69</div><div class="t" style="left:461px;top:214px;width:103px;text-align:right;font-size:10.67px;line-height:14px;font-weight:400;color:#333">651 277,31</div><div class="t" style="left:566px;top:214px;width:103px;text-align:right;font-size:10.67px;line-height:14px;font-weight:400;color:#333">1 060,71</div><div class="t" style="left:671px;top:214px;width:103px;text-align:right;font-size:10.67px;line-height:14px;font-weight:400;color:#333">23 009,91</div><div class="t" style="left:776px;top:214px;width:103px;text-align:right;font-size:10.67px;line-height:14px;font-weight:400;color:#333">35 060,61</div><div class="t" style="left:881px;top:214px;width:103px;text-align:right;font-size:10.67px;line-height:14px;font-weight:400;color:#333">66 171,00</div><div class="t" style="left:986px;top:214px;width:103px;text-align:right;font-size:10.67px;line-height:14px;font-weight:400;color:#333">614</div><div class="t" style="left:1091px;top:214px;width:103px;text-align:right;font-size:10.67px;line-height:14px;font-weight:400;color:#333">606</div><div class="t" style="left:1196px;top:214px;width:103px;text-align:right;font-size:10.67px;line-height:14px;font-weight:400;color:#333">77</div><div class="t" style="left:1301px;top:214px;width:103px;text-align:right;font-size:10.67px;line-height:14px;font-weight:400;color:#333">12,71</div><div class="t" style="left:1406px;top:214px;width:103px;text-align:right;font-size:10.67px;line-height:14px;font-weight:400;color:#333">29</div><div class="t" style="left:1511px;top:214px;width:103px;text-align:right;font-size:10.67px;line-height:14px;font-weight:400;color:#333">4,72</div><div class="a" style="left:42px;top:229px;width:1602px;height:14px;background:#dcf0fe;"></div><div class="a" style="left:42px;top:243px;width:1602px;height:1px;background:#7f8bc4;"></div><div class="t" style="left:58px;top:229px;font-size:11px;line-height:14px;font-weight:700;color:#042a6c;letter-spacing:0.22px">Велокамеры</div><div class="t" style="left:251px;top:229px;width:103px;text-align:right;font-size:10.67px;line-height:14px;font-weight:700;color:#042a6c">680 506,00</div><div class="t" style="left:356px;top:229px;width:103px;text-align:right;font-size:10.67px;line-height:14px;font-weight:700;color:#042a6c">156 135,44</div><div class="t" style="left:461px;top:229px;width:103px;text-align:right;font-size:10.67px;line-height:14px;font-weight:700;color:#042a6c">524 370,56</div><div class="t" style="left:566px;top:229px;width:103px;text-align:right;font-size:10.67px;line-height:14px;font-weight:700;color:#042a6c">276,13</div><div class="t" style="left:671px;top:229px;width:103px;text-align:right;font-size:10.67px;line-height:14px;font-weight:700;color:#042a6c">10 368,75</div><div class="t" style="left:776px;top:229px;width:103px;text-align:right;font-size:10.67px;line-height:14px;font-weight:700;color:#042a6c">28 501,79</div><div class="t" style="left:881px;top:229px;width:103px;text-align:right;font-size:10.67px;line-height:14px;font-weight:700;color:#042a6c">90 243,00</div><div class="t" style="left:986px;top:229px;width:103px;text-align:right;font-size:10.67px;line-height:14px;font-weight:700;color:#042a6c">1 899</div><div class="t" style="left:1091px;top:229px;width:103px;text-align:right;font-size:10.67px;line-height:14px;font-weight:700;color:#042a6c">2 184</div><div class="t" style="left:1196px;top:229px;width:103px;text-align:right;font-size:10.67px;line-height:14px;font-weight:700;color:#042a6c">87</div><div class="t" style="left:1301px;top:229px;width:103px;text-align:right;font-size:10.67px;line-height:14px;font-weight:700;color:#042a6c">3,98</div><div class="t" style="left:1406px;top:229px;width:103px;text-align:right;font-size:10.67px;line-height:14px;font-weight:700;color:#042a6c">27</div><div class="t" style="left:1511px;top:229px;width:103px;text-align:right;font-size:10.67px;line-height:14px;font-weight:700;color:#042a6c">1,42</div><div class="a" style="left:42px;top:258px;width:1602px;height:1px;background:#7f8bc4;"></div><div class="t" style="left:251px;top:244px;width:103px;text-align:right;font-size:10.67px;line-height:14px;font-weight:400;color:#333">680 506,00</div><div class="t" style="left:356px;top:244px;width:103px;text-align:right;font-size:10.67px;line-height:14px;font-weight:400;color:#333">156 135,44</div><div class="t" style="left:461px;top:244px;width:103px;text-align:right;font-size:10.67px;line-height:14px;font-weight:400;color:#333">524 370,56</div><div class="t" style="left:566px;top:244px;width:103px;text-align:right;font-size:10.67px;line-height:14px;font-weight:400;color:#333">276,13</div><div class="t" style="left:671px;top:244px;width:103px;text-align:right;font-size:10.67px;line-height:14px;font-weight:400;color:#333">10 368,75</div><div class="t" style="left:776px;top:244px;width:103px;text-align:right;font-size:10.67px;line-height:14px;font-weight:400;color:#333">28 501,79</div><div class="t" style="left:881px;top:244px;width:103px;text-align:right;font-size:10.67px;line-height:14px;font-weight:400;color:#333">90 243,00</div><div class="t" style="left:986px;top:244px;width:103px;text-align:right;font-size:10.67px;line-height:14px;font-weight:400;color:#333">1 899</div><div class="t" style="left:1091px;top:244px;width:103px;text-align:right;font-size:10.67px;line-height:14px;font-weight:400;color:#333">2 184</div><div class="t" style="left:1196px;top:244px;width:103px;text-align:right;font-size:10.67px;line-height:14px;font-weight:400;color:#333">87</div><div class="t" style="left:1301px;top:244px;width:103px;text-align:right;font-size:10.67px;line-height:14px;font-weight:400;color:#333">3,98</div><div class="t" style="left:1406px;top:244px;width:103px;text-align:right;font-size:10.67px;line-height:14px;font-weight:400;color:#333">27</div><div class="t" style="left:1511px;top:244px;width:103px;text-align:right;font-size:10.67px;line-height:14px;font-weight:400;color:#333">1,42</div><div class="a" style="left:42px;top:259px;width:1602px;height:14px;background:#dcf0fe;"></div><div class="a" style="left:42px;top:273px;width:1602px;height:1px;background:#7f8bc4;"></div><div class="t" style="left:58px;top:259px;font-size:11px;line-height:14px;font-weight:700;color:#042a6c;letter-spacing:0.22px">Шифтеры велосипедные</div><div class="t" style="left:251px;top:259px;width:103px;text-align:right;font-size:10.67px;line-height:14px;font-weight:700;color:#042a6c">246 929,00</div><div class="t" style="left:356px;top:259px;width:103px;text-align:right;font-size:10.67px;line-height:14px;font-weight:700;color:#042a6c">27 589,87</div><div class="t" style="left:461px;top:259px;width:103px;text-align:right;font-size:10.67px;line-height:14px;font-weight:700;color:#042a6c">219 339,13</div><div class="t" style="left:566px;top:259px;width:103px;text-align:right;font-size:10.67px;line-height:14px;font-weight:700;color:#042a6c">1 096,7</div><div class="t" style="left:776px;top:259px;width:103px;text-align:right;font-size:10.67px;line-height:14px;font-weight:700;color:#042a6c">12 185,41</div><div class="t" style="left:881px;top:259px;width:103px;text-align:right;font-size:10.67px;line-height:14px;font-weight:700;color:#042a6c">9 001,00</div><div class="t" style="left:986px;top:259px;width:103px;text-align:right;font-size:10.67px;line-height:14px;font-weight:700;color:#042a6c">200</div><div class="t" style="left:1091px;top:259px;width:103px;text-align:right;font-size:10.67px;line-height:14px;font-weight:700;color:#042a6c">211</div><div class="t" style="left:1196px;top:259px;width:103px;text-align:right;font-size:10.67px;line-height:14px;font-weight:700;color:#042a6c">17</div><div class="t" style="left:1301px;top:259px;width:103px;text-align:right;font-size:10.67px;line-height:14px;font-weight:700;color:#042a6c">8,06</div><div class="a" style="left:42px;top:288px;width:1602px;height:1px;background:#7f8bc4;"></div><div class="t" style="left:251px;top:274px;width:103px;text-align:right;font-size:10.67px;line-height:14px;font-weight:400;color:#333">246 929,00</div><div class="t" style="left:356px;top:274px;width:103px;text-align:right;font-size:10.67px;line-height:14px;font-weight:400;color:#333">27 589,87</div><div class="t" style="left:461px;top:274px;width:103px;text-align:right;font-size:10.67px;line-height:14px;font-weight:400;color:#333">219 339,13</div><div class="t" style="left:566px;top:274px;width:103px;text-align:right;font-size:10.67px;line-height:14px;font-weight:400;color:#333">1 096,7</div><div class="t" style="left:776px;top:274px;width:103px;text-align:right;font-size:10.67px;line-height:14px;font-weight:400;color:#333">12 185,41</div><div class="t" style="left:881px;top:274px;width:103px;text-align:right;font-size:10.67px;line-height:14px;font-weight:400;color:#333">9 001,00</div><div class="t" style="left:986px;top:274px;width:103px;text-align:right;font-size:10.67px;line-height:14px;font-weight:400;color:#333">200</div><div class="t" style="left:1091px;top:274px;width:103px;text-align:right;font-size:10.67px;line-height:14px;font-weight:400;color:#333">211</div><div class="t" style="left:1196px;top:274px;width:103px;text-align:right;font-size:10.67px;line-height:14px;font-weight:400;color:#333">17</div><div class="t" style="left:1301px;top:274px;width:103px;text-align:right;font-size:10.67px;line-height:14px;font-weight:400;color:#333">8,06</div><div class="a" style="left:42px;top:289px;width:1602px;height:14px;background:#dcf0fe;"></div><div class="a" style="left:42px;top:303px;width:1602px;height:1px;background:#7f8bc4;"></div><div class="t" style="left:58px;top:289px;font-size:11px;line-height:14px;font-weight:700;color:#042a6c;letter-spacing:0.22px">Переключатели велосипедные</div><div class="t" style="left:251px;top:289px;width:103px;text-align:right;font-size:10.67px;line-height:14px;font-weight:700;color:#042a6c">261 623,00</div><div class="t" style="left:356px;top:289px;width:103px;text-align:right;font-size:10.67px;line-height:14px;font-weight:700;color:#042a6c">17 971,02</div><div class="t" style="left:461px;top:289px;width:103px;text-align:right;font-size:10.67px;line-height:14px;font-weight:700;color:#042a6c">243 651,98</div><div class="t" style="left:566px;top:289px;width:103px;text-align:right;font-size:10.67px;line-height:14px;font-weight:700;color:#042a6c">1 063,98</div><div class="t" style="left:671px;top:289px;width:103px;text-align:right;font-size:10.67px;line-height:14px;font-weight:700;color:#042a6c">18 973,83</div><div class="t" style="left:776px;top:289px;width:103px;text-align:right;font-size:10.67px;line-height:14px;font-weight:700;color:#042a6c">13 541,59</div><div class="t" style="left:881px;top:289px;width:103px;text-align:right;font-size:10.67px;line-height:14px;font-weight:700;color:#042a6c">11 016,00</div><div class="t" style="left:986px;top:289px;width:103px;text-align:right;font-size:10.67px;line-height:14px;font-weight:700;color:#042a6c">229</div><div class="t" style="left:1091px;top:289px;width:103px;text-align:right;font-size:10.67px;line-height:14px;font-weight:700;color:#042a6c">249</div><div class="t" style="left:1196px;top:289px;width:103px;text-align:right;font-size:10.67px;line-height:14px;font-weight:700;color:#042a6c">32</div><div class="t" style="left:1301px;top:289px;width:103px;text-align:right;font-size:10.67px;line-height:14px;font-weight:700;color:#042a6c">12,85</div><div class="t" style="left:1406px;top:289px;width:103px;text-align:right;font-size:10.67px;line-height:14px;font-weight:700;color:#042a6c">17</div><div class="t" style="left:1511px;top:289px;width:103px;text-align:right;font-size:10.67px;line-height:14px;font-weight:700;color:#042a6c">7,42</div><div class="a" style="left:42px;top:318px;width:1602px;height:1px;background:#7f8bc4;"></div><div class="t" style="left:251px;top:304px;width:103px;text-align:right;font-size:10.67px;line-height:14px;font-weight:400;color:#333">261 623,00</div><div class="t" style="left:356px;top:304px;width:103px;text-align:right;font-size:10.67px;line-height:14px;font-weight:400;color:#333">17 971,02</div><div class="t" style="left:461px;top:304px;width:103px;text-align:right;font-size:10.67px;line-height:14px;font-weight:400;color:#333">243 651,98</div><div class="t" style="left:566px;top:304px;width:103px;text-align:right;font-size:10.67px;line-height:14px;font-weight:400;color:#333">1 063,98</div><div class="t" style="left:671px;top:304px;width:103px;text-align:right;font-size:10.67px;line-height:14px;font-weight:400;color:#333">18 973,83</div><div class="t" style="left:776px;top:304px;width:103px;text-align:right;font-size:10.67px;line-height:14px;font-weight:400;color:#333">13 541,59</div><div class="t" style="left:881px;top:304px;width:103px;text-align:right;font-size:10.67px;line-height:14px;font-weight:400;color:#333">11 016,00</div><div class="t" style="left:986px;top:304px;width:103px;text-align:right;font-size:10.67px;line-height:14px;font-weight:400;color:#333">229</div><div class="t" style="left:1091px;top:304px;width:103px;text-align:right;font-size:10.67px;line-height:14px;font-weight:400;color:#333">249</div><div class="t" style="left:1196px;top:304px;width:103px;text-align:right;font-size:10.67px;line-height:14px;font-weight:400;color:#333">32</div><div class="t" style="left:1301px;top:304px;width:103px;text-align:right;font-size:10.67px;line-height:14px;font-weight:400;color:#333">12,85</div><div class="t" style="left:1406px;top:304px;width:103px;text-align:right;font-size:10.67px;line-height:14px;font-weight:400;color:#333">17</div><div class="t" style="left:1511px;top:304px;width:103px;text-align:right;font-size:10.67px;line-height:14px;font-weight:400;color:#333">7,42</div><div class="a" style="left:42px;top:319px;width:1602px;height:14px;background:#dcf0fe;"></div><div class="a" style="left:42px;top:333px;width:1602px;height:1px;background:#7f8bc4;"></div><div class="t" style="left:58px;top:319px;font-size:11px;line-height:14px;font-weight:700;color:#042a6c;letter-spacing:0.22px">Корзины для велосипеда</div><div class="t" style="left:251px;top:319px;width:103px;text-align:right;font-size:10.67px;line-height:14px;font-weight:700;color:#042a6c">239 663,00</div><div class="t" style="left:356px;top:319px;width:103px;text-align:right;font-size:10.67px;line-height:14px;font-weight:700;color:#042a6c">17 720,81</div><div class="t" style="left:461px;top:319px;width:103px;text-align:right;font-size:10.67px;line-height:14px;font-weight:700;color:#042a6c">221 942,19</div><div class="t" style="left:566px;top:319px;width:103px;text-align:right;font-size:10.67px;line-height:14px;font-weight:700;color:#042a6c">652,77</div><div class="t" style="left:671px;top:319px;width:103px;text-align:right;font-size:10.67px;line-height:14px;font-weight:700;color:#042a6c">7 299,61</div><div class="t" style="left:776px;top:319px;width:103px;text-align:right;font-size:10.67px;line-height:14px;font-weight:700;color:#042a6c">11 469,23</div><div class="t" style="left:881px;top:319px;width:103px;text-align:right;font-size:10.67px;line-height:14px;font-weight:700;color:#042a6c">36 705,00</div><div class="t" style="left:986px;top:319px;width:103px;text-align:right;font-size:10.67px;line-height:14px;font-weight:700;color:#042a6c">340</div><div class="t" style="left:1091px;top:319px;width:103px;text-align:right;font-size:10.67px;line-height:14px;font-weight:700;color:#042a6c">326</div><div class="t" style="left:1196px;top:319px;width:103px;text-align:right;font-size:10.67px;line-height:14px;font-weight:700;color:#042a6c">75</div><div class="t" style="left:1301px;top:319px;width:103px;text-align:right;font-size:10.67px;line-height:14px;font-weight:700;color:#042a6c">23,01</div><div class="t" style="left:1406px;top:319px;width:103px;text-align:right;font-size:10.67px;line-height:14px;font-weight:700;color:#042a6c">9</div><div class="t" style="left:1511px;top:319px;width:103px;text-align:right;font-size:10.67px;line-height:14px;font-weight:700;color:#042a6c">2,65</div><div class="a" style="left:42px;top:348px;width:1602px;height:1px;background:#7f8bc4;"></div><div class="t" style="left:251px;top:334px;width:103px;text-align:right;font-size:10.67px;line-height:14px;font-weight:400;color:#333">239 663,00</div><div class="t" style="left:356px;top:334px;width:103px;text-align:right;font-size:10.67px;line-height:14px;font-weight:400;color:#333">17 720,81</div><div class="t" style="left:461px;top:334px;width:103px;text-align:right;font-size:10.67px;line-height:14px;font-weight:400;color:#333">221 942,19</div><div class="t" style="left:566px;top:334px;width:103px;text-align:right;font-size:10.67px;line-height:14px;font-weight:400;color:#333">652,77</div><div class="t" style="left:671px;top:334px;width:103px;text-align:right;font-size:10.67px;line-height:14px;font-weight:400;color:#333">7 299,61</div><div class="t" style="left:776px;top:334px;width:103px;text-align:right;font-size:10.67px;line-height:14px;font-weight:400;color:#333">11 469,23</div><div class="t" style="left:881px;top:334px;width:103px;text-align:right;font-size:10.67px;line-height:14px;font-weight:400;color:#333">36 705,00</div><div class="t" style="left:986px;top:334px;width:103px;text-align:right;font-size:10.67px;line-height:14px;font-weight:400;color:#333">340</div><div class="t" style="left:1091px;top:334px;width:103px;text-align:right;font-size:10.67px;line-height:14px;font-weight:400;color:#333">326</div><div class="t" style="left:1196px;top:334px;width:103px;text-align:right;font-size:10.67px;line-height:14px;font-weight:400;color:#333">75</div><div class="t" style="left:1301px;top:334px;width:103px;text-align:right;font-size:10.67px;line-height:14px;font-weight:400;color:#333">23,01</div><div class="t" style="left:1406px;top:334px;width:103px;text-align:right;font-size:10.67px;line-height:14px;font-weight:400;color:#333">9</div><div class="t" style="left:1511px;top:334px;width:103px;text-align:right;font-size:10.67px;line-height:14px;font-weight:400;color:#333">2,65</div><div class="a" style="left:42px;top:349px;width:1602px;height:14px;background:#dcf0fe;"></div><div class="a" style="left:42px;top:363px;width:1602px;height:1px;background:#7f8bc4;"></div><div class="t" style="left:58px;top:349px;font-size:11px;line-height:14px;font-weight:700;color:#042a6c;letter-spacing:0.22px">Лыжероллеры</div><div class="t" style="left:251px;top:349px;width:103px;text-align:right;font-size:10.67px;line-height:14px;font-weight:700;color:#042a6c">216 500,00</div><div class="t" style="left:356px;top:349px;width:103px;text-align:right;font-size:10.67px;line-height:14px;font-weight:700;color:#042a6c">15 155</div><div class="t" style="left:461px;top:349px;width:103px;text-align:right;font-size:10.67px;line-height:14px;font-weight:700;color:#042a6c">201 345,00</div><div class="t" style="left:566px;top:349px;width:103px;text-align:right;font-size:10.67px;line-height:14px;font-weight:700;color:#042a6c">4 474,33</div><div class="t" style="left:776px;top:349px;width:103px;text-align:right;font-size:10.67px;line-height:14px;font-weight:700;color:#042a6c">10 675,50</div><div class="t" style="left:881px;top:349px;width:103px;text-align:right;font-size:10.67px;line-height:14px;font-weight:700;color:#042a6c">4 227,00</div><div class="t" style="left:986px;top:349px;width:103px;text-align:right;font-size:10.67px;line-height:14px;font-weight:700;color:#042a6c">45</div><div class="t" style="left:1091px;top:349px;width:103px;text-align:right;font-size:10.67px;line-height:14px;font-weight:700;color:#042a6c">39</div><div class="t" style="left:1196px;top:349px;width:103px;text-align:right;font-size:10.67px;line-height:14px;font-weight:700;color:#042a6c">4</div><div class="t" style="left:1301px;top:349px;width:103px;text-align:right;font-size:10.67px;line-height:14px;font-weight:700;color:#042a6c">10,26</div><div class="a" style="left:42px;top:378px;width:1602px;height:1px;background:#7f8bc4;"></div><div class="t" style="left:251px;top:364px;width:103px;text-align:right;font-size:10.67px;line-height:14px;font-weight:400;color:#333">216 500,00</div><div class="t" style="left:356px;top:364px;width:103px;text-align:right;font-size:10.67px;line-height:14px;font-weight:400;color:#333">15 155</div><div class="t" style="left:461px;top:364px;width:103px;text-align:right;font-size:10.67px;line-height:14px;font-weight:400;color:#333">201 345,00</div><div class="t" style="left:566px;top:364px;width:103px;text-align:right;font-size:10.67px;line-height:14px;font-weight:400;color:#333">4 474,33</div><div class="t" style="left:776px;top:364px;width:103px;text-align:right;font-size:10.67px;line-height:14px;font-weight:400;color:#333">10 675,50</div><div class="t" style="left:881px;top:364px;width:103px;text-align:right;font-size:10.67px;line-height:14px;font-weight:400;color:#333">4 227,00</div><div class="t" style="left:986px;top:364px;width:103px;text-align:right;font-size:10.67px;line-height:14px;font-weight:400;color:#333">45</div><div class="t" style="left:1091px;top:364px;width:103px;text-align:right;font-size:10.67px;line-height:14px;font-weight:400;color:#333">39</div><div class="t" style="left:1196px;top:364px;width:103px;text-align:right;font-size:10.67px;line-height:14px;font-weight:400;color:#333">4</div><div class="t" style="left:1301px;top:364px;width:103px;text-align:right;font-size:10.67px;line-height:14px;font-weight:400;color:#333">10,26</div><div class="a" style="left:42px;top:379px;width:1602px;height:14px;background:#dcf0fe;"></div><div class="a" style="left:42px;top:393px;width:1602px;height:1px;background:#7f8bc4;"></div><div class="t" style="left:58px;top:379px;font-size:11px;line-height:14px;font-weight:700;color:#042a6c;letter-spacing:0.22px">Седла велосипедные</div><div class="t" style="left:251px;top:379px;width:103px;text-align:right;font-size:10.67px;line-height:14px;font-weight:700;color:#042a6c">222 729,00</div><div class="t" style="left:356px;top:379px;width:103px;text-align:right;font-size:10.67px;line-height:14px;font-weight:700;color:#042a6c">25 737,43</div><div class="t" style="left:461px;top:379px;width:103px;text-align:right;font-size:10.67px;line-height:14px;font-weight:700;color:#042a6c">196 991,57</div><div class="t" style="left:566px;top:379px;width:103px;text-align:right;font-size:10.67px;line-height:14px;font-weight:700;color:#042a6c">684</div><div class="t" style="left:671px;top:379px;width:103px;text-align:right;font-size:10.67px;line-height:14px;font-weight:700;color:#042a6c">15 828,63</div><div class="t" style="left:776px;top:379px;width:103px;text-align:right;font-size:10.67px;line-height:14px;font-weight:700;color:#042a6c">10 681,64</div><div class="t" style="left:881px;top:379px;width:103px;text-align:right;font-size:10.67px;line-height:14px;font-weight:700;color:#042a6c">15 014,00</div><div class="t" style="left:986px;top:379px;width:103px;text-align:right;font-size:10.67px;line-height:14px;font-weight:700;color:#042a6c">288</div><div class="t" style="left:1091px;top:379px;width:103px;text-align:right;font-size:10.67px;line-height:14px;font-weight:700;color:#042a6c">311</div><div class="t" style="left:1196px;top:379px;width:103px;text-align:right;font-size:10.67px;line-height:14px;font-weight:700;color:#042a6c">78</div><div class="t" style="left:1301px;top:379px;width:103px;text-align:right;font-size:10.67px;line-height:14px;font-weight:700;color:#042a6c">25,08</div><div class="t" style="left:1406px;top:379px;width:103px;text-align:right;font-size:10.67px;line-height:14px;font-weight:700;color:#042a6c">19</div><div class="t" style="left:1511px;top:379px;width:103px;text-align:right;font-size:10.67px;line-height:14px;font-weight:700;color:#042a6c">6,6</div><div class="a" style="left:42px;top:408px;width:1602px;height:1px;background:#7f8bc4;"></div><div class="t" style="left:251px;top:394px;width:103px;text-align:right;font-size:10.67px;line-height:14px;font-weight:400;color:#333">222 729,00</div><div class="t" style="left:356px;top:394px;width:103px;text-align:right;font-size:10.67px;line-height:14px;font-weight:400;color:#333">25 737,43</div><div class="t" style="left:461px;top:394px;width:103px;text-align:right;font-size:10.67px;line-height:14px;font-weight:400;color:#333">196 991,57</div><div class="t" style="left:566px;top:394px;width:103px;text-align:right;font-size:10.67px;line-height:14px;font-weight:400;color:#333">684</div><div class="t" style="left:671px;top:394px;width:103px;text-align:right;font-size:10.67px;line-height:14px;font-weight:400;color:#333">15 828,63</div><div class="t" style="left:776px;top:394px;width:103px;text-align:right;font-size:10.67px;line-height:14px;font-weight:400;color:#333">10 681,64</div><div class="t" style="left:881px;top:394px;width:103px;text-align:right;font-size:10.67px;line-height:14px;font-weight:400;color:#333">15 014,00</div><div class="t" style="left:986px;top:394px;width:103px;text-align:right;font-size:10.67px;line-height:14px;font-weight:400;color:#333">288</div><div class="t" style="left:1091px;top:394px;width:103px;text-align:right;font-size:10.67px;line-height:14px;font-weight:400;color:#333">311</div><div class="t" style="left:1196px;top:394px;width:103px;text-align:right;font-size:10.67px;line-height:14px;font-weight:400;color:#333">78</div><div class="t" style="left:1301px;top:394px;width:103px;text-align:right;font-size:10.67px;line-height:14px;font-weight:400;color:#333">25,08</div><div class="t" style="left:1406px;top:394px;width:103px;text-align:right;font-size:10.67px;line-height:14px;font-weight:400;color:#333">19</div><div class="t" style="left:1511px;top:394px;width:103px;text-align:right;font-size:10.67px;line-height:14px;font-weight:400;color:#333">6,6</div><div class="a" style="left:42px;top:409px;width:1602px;height:14px;background:#dcf0fe;"></div><div class="a" style="left:42px;top:423px;width:1602px;height:1px;background:#7f8bc4;"></div><div class="t" style="left:58px;top:409px;font-size:11px;line-height:14px;font-weight:700;color:#042a6c;letter-spacing:0.22px">Запчасти для самоката</div><div class="t" style="left:251px;top:409px;width:103px;text-align:right;font-size:10.67px;line-height:14px;font-weight:700;color:#042a6c">219 450,00</div><div class="t" style="left:356px;top:409px;width:103px;text-align:right;font-size:10.67px;line-height:14px;font-weight:700;color:#042a6c">5 325</div><div class="t" style="left:461px;top:409px;width:103px;text-align:right;font-size:10.67px;line-height:14px;font-weight:700;color:#042a6c">214 125,00</div><div class="t" style="left:566px;top:409px;width:103px;text-align:right;font-size:10.67px;line-height:14px;font-weight:700;color:#042a6c">1 518,62</div><div class="t" style="left:671px;top:409px;width:103px;text-align:right;font-size:10.67px;line-height:14px;font-weight:700;color:#042a6c">14 665</div><div class="t" style="left:776px;top:409px;width:103px;text-align:right;font-size:10.67px;line-height:14px;font-weight:700;color:#042a6c">11 624,05</div><div class="t" style="left:881px;top:409px;width:103px;text-align:right;font-size:10.67px;line-height:14px;font-weight:700;color:#042a6c">14 862,00</div><div class="t" style="left:986px;top:409px;width:103px;text-align:right;font-size:10.67px;line-height:14px;font-weight:700;color:#042a6c">141</div><div class="t" style="left:1091px;top:409px;width:103px;text-align:right;font-size:10.67px;line-height:14px;font-weight:700;color:#042a6c">134</div><div class="t" style="left:1196px;top:409px;width:103px;text-align:right;font-size:10.67px;line-height:14px;font-weight:700;color:#042a6c">24</div><div class="t" style="left:1301px;top:409px;width:103px;text-align:right;font-size:10.67px;line-height:14px;font-weight:700;color:#042a6c">17,91</div><div class="t" style="left:1406px;top:409px;width:103px;text-align:right;font-size:10.67px;line-height:14px;font-weight:700;color:#042a6c">12</div><div class="t" style="left:1511px;top:409px;width:103px;text-align:right;font-size:10.67px;line-height:14px;font-weight:700;color:#042a6c">8,51</div><div class="a" style="left:42px;top:438px;width:1602px;height:1px;background:#7f8bc4;"></div><div class="t" style="left:251px;top:424px;width:103px;text-align:right;font-size:10.67px;line-height:14px;font-weight:400;color:#333">219 450,00</div><div class="t" style="left:356px;top:424px;width:103px;text-align:right;font-size:10.67px;line-height:14px;font-weight:400;color:#333">5 325</div><div class="t" style="left:461px;top:424px;width:103px;text-align:right;font-size:10.67px;line-height:14px;font-weight:400;color:#333">214 125,00</div><div class="t" style="left:566px;top:424px;width:103px;text-align:right;font-size:10.67px;line-height:14px;font-weight:400;color:#333">1 518,62</div><div class="t" style="left:671px;top:424px;width:103px;text-align:right;font-size:10.67px;line-height:14px;font-weight:400;color:#333">14 665</div><div class="t" style="left:776px;top:424px;width:103px;text-align:right;font-size:10.67px;line-height:14px;font-weight:400;color:#333">11 624,05</div><div class="t" style="left:881px;top:424px;width:103px;text-align:right;font-size:10.67px;line-height:14px;font-weight:400;color:#333">14 862,00</div><div class="t" style="left:986px;top:424px;width:103px;text-align:right;font-size:10.67px;line-height:14px;font-weight:400;color:#333">141</div><div class="t" style="left:1091px;top:424px;width:103px;text-align:right;font-size:10.67px;line-height:14px;font-weight:400;color:#333">134</div><div class="t" style="left:1196px;top:424px;width:103px;text-align:right;font-size:10.67px;line-height:14px;font-weight:400;color:#333">24</div><div class="t" style="left:1301px;top:424px;width:103px;text-align:right;font-size:10.67px;line-height:14px;font-weight:400;color:#333">17,91</div><div class="t" style="left:1406px;top:424px;width:103px;text-align:right;font-size:10.67px;line-height:14px;font-weight:400;color:#333">12</div><div class="t" style="left:1511px;top:424px;width:103px;text-align:right;font-size:10.67px;line-height:14px;font-weight:400;color:#333">8,51</div><div class="a" style="left:42px;top:439px;width:1602px;height:14px;background:#dcf0fe;"></div><div class="a" style="left:42px;top:453px;width:1602px;height:1px;background:#7f8bc4;"></div><div class="t" style="left:58px;top:439px;font-size:11px;line-height:14px;font-weight:700;color:#042a6c;letter-spacing:0.22px">Педали</div><div class="t" style="left:251px;top:439px;width:103px;text-align:right;font-size:10.67px;line-height:14px;font-weight:700;color:#042a6c">148 702,00</div><div class="t" style="left:356px;top:439px;width:103px;text-align:right;font-size:10.67px;line-height:14px;font-weight:700;color:#042a6c">14 191,06</div><div class="t" style="left:461px;top:439px;width:103px;text-align:right;font-size:10.67px;line-height:14px;font-weight:700;color:#042a6c">134 510,94</div><div class="t" style="left:566px;top:439px;width:103px;text-align:right;font-size:10.67px;line-height:14px;font-weight:700;color:#042a6c">459,08</div><div class="t" style="left:671px;top:439px;width:103px;text-align:right;font-size:10.67px;line-height:14px;font-weight:700;color:#042a6c">5 094,97</div><div class="t" style="left:776px;top:439px;width:103px;text-align:right;font-size:10.67px;line-height:14px;font-weight:700;color:#042a6c">7 850,21</div><div class="t" style="left:881px;top:439px;width:103px;text-align:right;font-size:10.67px;line-height:14px;font-weight:700;color:#042a6c">14 200,00</div><div class="t" style="left:986px;top:439px;width:103px;text-align:right;font-size:10.67px;line-height:14px;font-weight:700;color:#042a6c">293</div><div class="t" style="left:1091px;top:439px;width:103px;text-align:right;font-size:10.67px;line-height:14px;font-weight:700;color:#042a6c">322</div><div class="t" style="left:1196px;top:439px;width:103px;text-align:right;font-size:10.67px;line-height:14px;font-weight:700;color:#042a6c">40</div><div class="t" style="left:1301px;top:439px;width:103px;text-align:right;font-size:10.67px;line-height:14px;font-weight:700;color:#042a6c">12,42</div><div class="t" style="left:1406px;top:439px;width:103px;text-align:right;font-size:10.67px;line-height:14px;font-weight:700;color:#042a6c">16</div><div class="t" style="left:1511px;top:439px;width:103px;text-align:right;font-size:10.67px;line-height:14px;font-weight:700;color:#042a6c">5,46</div><div class="a" style="left:42px;top:468px;width:1602px;height:1px;background:#7f8bc4;"></div><div class="t" style="left:251px;top:454px;width:103px;text-align:right;font-size:10.67px;line-height:14px;font-weight:400;color:#333">148 702,00</div><div class="t" style="left:356px;top:454px;width:103px;text-align:right;font-size:10.67px;line-height:14px;font-weight:400;color:#333">14 191,06</div><div class="t" style="left:461px;top:454px;width:103px;text-align:right;font-size:10.67px;line-height:14px;font-weight:400;color:#333">134 510,94</div><div class="t" style="left:566px;top:454px;width:103px;text-align:right;font-size:10.67px;line-height:14px;font-weight:400;color:#333">459,08</div><div class="t" style="left:671px;top:454px;width:103px;text-align:right;font-size:10.67px;line-height:14px;font-weight:400;color:#333">5 094,97</div><div class="t" style="left:776px;top:454px;width:103px;text-align:right;font-size:10.67px;line-height:14px;font-weight:400;color:#333">7 850,21</div><div class="t" style="left:881px;top:454px;width:103px;text-align:right;font-size:10.67px;line-height:14px;font-weight:400;color:#333">14 200,00</div><div class="t" style="left:986px;top:454px;width:103px;text-align:right;font-size:10.67px;line-height:14px;font-weight:400;color:#333">293</div><div class="t" style="left:1091px;top:454px;width:103px;text-align:right;font-size:10.67px;line-height:14px;font-weight:400;color:#333">322</div><div class="t" style="left:1196px;top:454px;width:103px;text-align:right;font-size:10.67px;line-height:14px;font-weight:400;color:#333">40</div><div class="t" style="left:1301px;top:454px;width:103px;text-align:right;font-size:10.67px;line-height:14px;font-weight:400;color:#333">12,42</div><div class="t" style="left:1406px;top:454px;width:103px;text-align:right;font-size:10.67px;line-height:14px;font-weight:400;color:#333">16</div><div class="t" style="left:1511px;top:454px;width:103px;text-align:right;font-size:10.67px;line-height:14px;font-weight:400;color:#333">5,46</div><div class="a" style="left:42px;top:469px;width:1602px;height:14px;background:#dcf0fe;"></div><div class="a" style="left:42px;top:483px;width:1602px;height:1px;background:#7f8bc4;"></div><div class="t" style="left:58px;top:469px;font-size:11px;line-height:14px;font-weight:700;color:#042a6c;letter-spacing:0.22px">Шатуны велосипедные</div><div class="t" style="left:251px;top:469px;width:103px;text-align:right;font-size:10.67px;line-height:14px;font-weight:700;color:#042a6c">129 910,00</div><div class="t" style="left:356px;top:469px;width:103px;text-align:right;font-size:10.67px;line-height:14px;font-weight:700;color:#042a6c">15 396,84</div><div class="t" style="left:461px;top:469px;width:103px;text-align:right;font-size:10.67px;line-height:14px;font-weight:700;color:#042a6c">114 513,16</div><div class="t" style="left:566px;top:469px;width:103px;text-align:right;font-size:10.67px;line-height:14px;font-weight:700;color:#042a6c">1 192,85</div><div class="t" style="left:671px;top:469px;width:103px;text-align:right;font-size:10.67px;line-height:14px;font-weight:700;color:#042a6c">1 386,2</div><div class="t" style="left:776px;top:469px;width:103px;text-align:right;font-size:10.67px;line-height:14px;font-weight:700;color:#042a6c">6 444,72</div><div class="t" style="left:881px;top:469px;width:103px;text-align:right;font-size:10.67px;line-height:14px;font-weight:700;color:#042a6c">6 345,00</div><div class="t" style="left:986px;top:469px;width:103px;text-align:right;font-size:10.67px;line-height:14px;font-weight:700;color:#042a6c">96</div><div class="t" style="left:1091px;top:469px;width:103px;text-align:right;font-size:10.67px;line-height:14px;font-weight:700;color:#042a6c">117</div><div class="t" style="left:1196px;top:469px;width:103px;text-align:right;font-size:10.67px;line-height:14px;font-weight:700;color:#042a6c">15</div><div class="t" style="left:1301px;top:469px;width:103px;text-align:right;font-size:10.67px;line-height:14px;font-weight:700;color:#042a6c">12,82</div><div class="t" style="left:1406px;top:469px;width:103px;text-align:right;font-size:10.67px;line-height:14px;font-weight:700;color:#042a6c">2</div><div class="t" style="left:1511px;top:469px;width:103px;text-align:right;font-size:10.67px;line-height:14px;font-weight:700;color:#042a6c">2,08</div><div class="a" style="left:42px;top:498px;width:1602px;height:1px;background:#7f8bc4;"></div><div class="t" style="left:251px;top:484px;width:103px;text-align:right;font-size:10.67px;line-height:14px;font-weight:400;color:#333">129 910,00</div><div class="t" style="left:356px;top:484px;width:103px;text-align:right;font-size:10.67px;line-height:14px;font-weight:400;color:#333">15 396,84</div><div class="t" style="left:461px;top:484px;width:103px;text-align:right;font-size:10.67px;line-height:14px;font-weight:400;color:#333">114 513,16</div><div class="t" style="left:566px;top:484px;width:103px;text-align:right;font-size:10.67px;line-height:14px;font-weight:400;color:#333">1 192,85</div><div class="t" style="left:671px;top:484px;width:103px;text-align:right;font-size:10.67px;line-height:14px;font-weight:400;color:#333">1 386,2</div><div class="t" style="left:776px;top:484px;width:103px;text-align:right;font-size:10.67px;line-height:14px;font-weight:400;color:#333">6 444,72</div><div class="t" style="left:881px;top:484px;width:103px;text-align:right;font-size:10.67px;line-height:14px;font-weight:400;color:#333">6 345,00</div><div class="t" style="left:986px;top:484px;width:103px;text-align:right;font-size:10.67px;line-height:14px;font-weight:400;color:#333">96</div><div class="t" style="left:1091px;top:484px;width:103px;text-align:right;font-size:10.67px;line-height:14px;font-weight:400;color:#333">117</div><div class="t" style="left:1196px;top:484px;width:103px;text-align:right;font-size:10.67px;line-height:14px;font-weight:400;color:#333">15</div><div class="t" style="left:1301px;top:484px;width:103px;text-align:right;font-size:10.67px;line-height:14px;font-weight:400;color:#333">12,82</div><div class="t" style="left:1406px;top:484px;width:103px;text-align:right;font-size:10.67px;line-height:14px;font-weight:400;color:#333">2</div><div class="t" style="left:1511px;top:484px;width:103px;text-align:right;font-size:10.67px;line-height:14px;font-weight:400;color:#333">2,08</div><div class="a" style="left:42px;top:499px;width:1602px;height:14px;background:#dcf0fe;"></div><div class="a" style="left:42px;top:513px;width:1602px;height:1px;background:#7f8bc4;"></div><div class="t" style="left:58px;top:499px;font-size:11px;line-height:14px;font-weight:700;color:#042a6c;letter-spacing:0.22px">Грипсы</div><div class="t" style="left:251px;top:499px;width:103px;text-align:right;font-size:10.67px;line-height:14px;font-weight:700;color:#042a6c">120 900,00</div><div class="t" style="left:356px;top:499px;width:103px;text-align:right;font-size:10.67px;line-height:14px;font-weight:700;color:#042a6c">8 004,12</div><div class="t" style="left:461px;top:499px;width:103px;text-align:right;font-size:10.67px;line-height:14px;font-weight:700;color:#042a6c">112 895,88</div><div class="t" style="left:566px;top:499px;width:103px;text-align:right;font-size:10.67px;line-height:14px;font-weight:700;color:#042a6c">553,41</div><div class="t" style="left:671px;top:499px;width:103px;text-align:right;font-size:10.67px;line-height:14px;font-weight:700;color:#042a6c">1 989,66</div><div class="t" style="left:776px;top:499px;width:103px;text-align:right;font-size:10.67px;line-height:14px;font-weight:700;color:#042a6c">6 195,54</div><div class="t" style="left:881px;top:499px;width:103px;text-align:right;font-size:10.67px;line-height:14px;font-weight:700;color:#042a6c">9 943,00</div><div class="t" style="left:986px;top:499px;width:103px;text-align:right;font-size:10.67px;line-height:14px;font-weight:700;color:#042a6c">204</div><div class="t" style="left:1091px;top:499px;width:103px;text-align:right;font-size:10.67px;line-height:14px;font-weight:700;color:#042a6c">223</div><div class="t" style="left:1196px;top:499px;width:103px;text-align:right;font-size:10.67px;line-height:14px;font-weight:700;color:#042a6c">31</div><div class="t" style="left:1301px;top:499px;width:103px;text-align:right;font-size:10.67px;line-height:14px;font-weight:700;color:#042a6c">13,9</div><div class="t" style="left:1406px;top:499px;width:103px;text-align:right;font-size:10.67px;line-height:14px;font-weight:700;color:#042a6c">4</div><div class="t" style="left:1511px;top:499px;width:103px;text-align:right;font-size:10.67px;line-height:14px;font-weight:700;color:#042a6c">1,96</div><div class="a" style="left:42px;top:528px;width:1602px;height:1px;background:#7f8bc4;"></div><div class="t" style="left:251px;top:514px;width:103px;text-align:right;font-size:10.67px;line-height:14px;font-weight:400;color:#333">120 900,00</div><div class="t" style="left:356px;top:514px;width:103px;text-align:right;font-size:10.67px;line-height:14px;font-weight:400;color:#333">8 004,12</div><div class="t" style="left:461px;top:514px;width:103px;text-align:right;font-size:10.67px;line-height:14px;font-weight:400;color:#333">112 895,88</div><div class="t" style="left:566px;top:514px;width:103px;text-align:right;font-size:10.67px;line-height:14px;font-weight:400;color:#333">553,41</div><div class="t" style="left:671px;top:514px;width:103px;text-align:right;font-size:10.67px;line-height:14px;font-weight:400;color:#333">1 989,66</div><div class="t" style="left:776px;top:514px;width:103px;text-align:right;font-size:10.67px;line-height:14px;font-weight:400;color:#333">6 195,54</div><div class="t" style="left:881px;top:514px;width:103px;text-align:right;font-size:10.67px;line-height:14px;font-weight:400;color:#333">9 943,00</div><div class="t" style="left:986px;top:514px;width:103px;text-align:right;font-size:10.67px;line-height:14px;font-weight:400;color:#333">204</div><div class="t" style="left:1091px;top:514px;width:103px;text-align:right;font-size:10.67px;line-height:14px;font-weight:400;color:#333">223</div><div class="t" style="left:1196px;top:514px;width:103px;text-align:right;font-size:10.67px;line-height:14px;font-weight:400;color:#333">31</div><div class="t" style="left:1301px;top:514px;width:103px;text-align:right;font-size:10.67px;line-height:14px;font-weight:400;color:#333">13,9</div><div class="t" style="left:1406px;top:514px;width:103px;text-align:right;font-size:10.67px;line-height:14px;font-weight:400;color:#333">4</div><div class="t" style="left:1511px;top:514px;width:103px;text-align:right;font-size:10.67px;line-height:14px;font-weight:400;color:#333">1,96</div><div class="a" style="left:42px;top:529px;width:1602px;height:14px;background:#dcf0fe;"></div><div class="a" style="left:42px;top:543px;width:1602px;height:1px;background:#7f8bc4;"></div><div class="t" style="left:58px;top:529px;font-size:11px;line-height:14px;font-weight:700;color:#042a6c;letter-spacing:0.22px">Крылья</div><div class="t" style="left:251px;top:529px;width:103px;text-align:right;font-size:10.67px;line-height:14px;font-weight:700;color:#042a6c">122 995,00</div><div class="t" style="left:356px;top:529px;width:103px;text-align:right;font-size:10.67px;line-height:14px;font-weight:700;color:#042a6c">8 377,4</div><div class="t" style="left:461px;top:529px;width:103px;text-align:right;font-size:10.67px;line-height:14px;font-weight:700;color:#042a6c">114 617,60</div><div class="t" style="left:566px;top:529px;width:103px;text-align:right;font-size:10.67px;line-height:14px;font-weight:700;color:#042a6c">739,47</div><div class="t" style="left:671px;top:529px;width:103px;text-align:right;font-size:10.67px;line-height:14px;font-weight:700;color:#042a6c">9 542,23</div><div class="t" style="left:776px;top:529px;width:103px;text-align:right;font-size:10.67px;line-height:14px;font-weight:700;color:#042a6c">6 100,16</div><div class="t" style="left:881px;top:529px;width:103px;text-align:right;font-size:10.67px;line-height:14px;font-weight:700;color:#042a6c">19 410,00</div><div class="t" style="left:986px;top:529px;width:103px;text-align:right;font-size:10.67px;line-height:14px;font-weight:700;color:#042a6c">155</div><div class="t" style="left:1091px;top:529px;width:103px;text-align:right;font-size:10.67px;line-height:14px;font-weight:700;color:#042a6c">177</div><div class="t" style="left:1196px;top:529px;width:103px;text-align:right;font-size:10.67px;line-height:14px;font-weight:700;color:#042a6c">25</div><div class="t" style="left:1301px;top:529px;width:103px;text-align:right;font-size:10.67px;line-height:14px;font-weight:700;color:#042a6c">14,12</div><div class="t" style="left:1406px;top:529px;width:103px;text-align:right;font-size:10.67px;line-height:14px;font-weight:700;color:#042a6c">7</div><div class="t" style="left:1511px;top:529px;width:103px;text-align:right;font-size:10.67px;line-height:14px;font-weight:700;color:#042a6c">4,52</div><div class="a" style="left:42px;top:558px;width:1602px;height:1px;background:#7f8bc4;"></div><div class="t" style="left:251px;top:544px;width:103px;text-align:right;font-size:10.67px;line-height:14px;font-weight:400;color:#333">122 995,00</div><div class="t" style="left:356px;top:544px;width:103px;text-align:right;font-size:10.67px;line-height:14px;font-weight:400;color:#333">8 377,4</div><div class="t" style="left:461px;top:544px;width:103px;text-align:right;font-size:10.67px;line-height:14px;font-weight:400;color:#333">114 617,60</div><div class="t" style="left:566px;top:544px;width:103px;text-align:right;font-size:10.67px;line-height:14px;font-weight:400;color:#333">739,47</div><div class="t" style="left:671px;top:544px;width:103px;text-align:right;font-size:10.67px;line-height:14px;font-weight:400;color:#333">9 542,23</div><div class="t" style="left:776px;top:544px;width:103px;text-align:right;font-size:10.67px;line-height:14px;font-weight:400;color:#333">6 100,16</div><div class="t" style="left:881px;top:544px;width:103px;text-align:right;font-size:10.67px;line-height:14px;font-weight:400;color:#333">19 410,00</div><div class="t" style="left:986px;top:544px;width:103px;text-align:right;font-size:10.67px;line-height:14px;font-weight:400;color:#333">155</div><div class="t" style="left:1091px;top:544px;width:103px;text-align:right;font-size:10.67px;line-height:14px;font-weight:400;color:#333">177</div><div class="t" style="left:1196px;top:544px;width:103px;text-align:right;font-size:10.67px;line-height:14px;font-weight:400;color:#333">25</div><div class="t" style="left:1301px;top:544px;width:103px;text-align:right;font-size:10.67px;line-height:14px;font-weight:400;color:#333">14,12</div><div class="t" style="left:1406px;top:544px;width:103px;text-align:right;font-size:10.67px;line-height:14px;font-weight:400;color:#333">7</div><div class="t" style="left:1511px;top:544px;width:103px;text-align:right;font-size:10.67px;line-height:14px;font-weight:400;color:#333">4,52</div><div class="a" style="left:42px;top:559px;width:1602px;height:14px;background:#dcf0fe;"></div><div class="a" style="left:42px;top:573px;width:1602px;height:1px;background:#7f8bc4;"></div><div class="t" style="left:58px;top:559px;font-size:11px;line-height:14px;font-weight:700;color:#042a6c;letter-spacing:0.22px">Флягодержатели</div><div class="t" style="left:251px;top:559px;width:103px;text-align:right;font-size:10.67px;line-height:14px;font-weight:700;color:#042a6c">107 994,00</div><div class="t" style="left:356px;top:559px;width:103px;text-align:right;font-size:10.67px;line-height:14px;font-weight:700;color:#042a6c">8 242,28</div><div class="t" style="left:461px;top:559px;width:103px;text-align:right;font-size:10.67px;line-height:14px;font-weight:700;color:#042a6c">99 751,72</div><div class="t" style="left:566px;top:559px;width:103px;text-align:right;font-size:10.67px;line-height:14px;font-weight:700;color:#042a6c">264,59</div><div class="t" style="left:671px;top:559px;width:103px;text-align:right;font-size:10.67px;line-height:14px;font-weight:700;color:#042a6c">1 565,26</div><div class="t" style="left:776px;top:559px;width:103px;text-align:right;font-size:10.67px;line-height:14px;font-weight:700;color:#042a6c">5 486,20</div><div class="t" style="left:881px;top:559px;width:103px;text-align:right;font-size:10.67px;line-height:14px;font-weight:700;color:#042a6c">20 457,00</div><div class="t" style="left:986px;top:559px;width:103px;text-align:right;font-size:10.67px;line-height:14px;font-weight:700;color:#042a6c">377</div><div class="t" style="left:1091px;top:559px;width:103px;text-align:right;font-size:10.67px;line-height:14px;font-weight:700;color:#042a6c">390</div><div class="t" style="left:1196px;top:559px;width:103px;text-align:right;font-size:10.67px;line-height:14px;font-weight:700;color:#042a6c">29</div><div class="t" style="left:1301px;top:559px;width:103px;text-align:right;font-size:10.67px;line-height:14px;font-weight:700;color:#042a6c">7,44</div><div class="t" style="left:1406px;top:559px;width:103px;text-align:right;font-size:10.67px;line-height:14px;font-weight:700;color:#042a6c">6</div><div class="t" style="left:1511px;top:559px;width:103px;text-align:right;font-size:10.67px;line-height:14px;font-weight:700;color:#042a6c">1,59</div><div class="a" style="left:42px;top:588px;width:1602px;height:1px;background:#7f8bc4;"></div><div class="t" style="left:251px;top:574px;width:103px;text-align:right;font-size:10.67px;line-height:14px;font-weight:400;color:#333">107 994,00</div><div class="t" style="left:356px;top:574px;width:103px;text-align:right;font-size:10.67px;line-height:14px;font-weight:400;color:#333">8 242,28</div><div class="t" style="left:461px;top:574px;width:103px;text-align:right;font-size:10.67px;line-height:14px;font-weight:400;color:#333">99 751,72</div><div class="t" style="left:566px;top:574px;width:103px;text-align:right;font-size:10.67px;line-height:14px;font-weight:400;color:#333">264,59</div><div class="t" style="left:671px;top:574px;width:103px;text-align:right;font-size:10.67px;line-height:14px;font-weight:400;color:#333">1 565,26</div><div class="t" style="left:776px;top:574px;width:103px;text-align:right;font-size:10.67px;line-height:14px;font-weight:400;color:#333">5 486,20</div><div class="t" style="left:881px;top:574px;width:103px;text-align:right;font-size:10.67px;line-height:14px;font-weight:400;color:#333">20 457,00</div><div class="t" style="left:986px;top:574px;width:103px;text-align:right;font-size:10.67px;line-height:14px;font-weight:400;color:#333">377</div><div class="t" style="left:1091px;top:574px;width:103px;text-align:right;font-size:10.67px;line-height:14px;font-weight:400;color:#333">390</div><div class="t" style="left:1196px;top:574px;width:103px;text-align:right;font-size:10.67px;line-height:14px;font-weight:400;color:#333">29</div><div class="t" style="left:1301px;top:574px;width:103px;text-align:right;font-size:10.67px;line-height:14px;font-weight:400;color:#333">7,44</div><div class="t" style="left:1406px;top:574px;width:103px;text-align:right;font-size:10.67px;line-height:14px;font-weight:400;color:#333">6</div><div class="t" style="left:1511px;top:574px;width:103px;text-align:right;font-size:10.67px;line-height:14px;font-weight:400;color:#333">1,59</div><div class="a" style="left:42px;top:589px;width:1602px;height:14px;background:#dcf0fe;"></div><div class="a" style="left:42px;top:603px;width:1602px;height:1px;background:#7f8bc4;"></div><div class="t" style="left:58px;top:589px;font-size:11px;line-height:14px;font-weight:700;color:#042a6c;letter-spacing:0.22px">Велодекор</div><div class="t" style="left:251px;top:589px;width:103px;text-align:right;font-size:10.67px;line-height:14px;font-weight:700;color:#042a6c">109 916,00</div><div class="t" style="left:356px;top:589px;width:103px;text-align:right;font-size:10.67px;line-height:14px;font-weight:700;color:#042a6c">7 694,12</div><div class="t" style="left:461px;top:589px;width:103px;text-align:right;font-size:10.67px;line-height:14px;font-weight:700;color:#042a6c">102 221,88</div><div class="t" style="left:566px;top:589px;width:103px;text-align:right;font-size:10.67px;line-height:14px;font-weight:700;color:#042a6c">4 088,88</div><div class="t" style="left:671px;top:589px;width:103px;text-align:right;font-size:10.67px;line-height:14px;font-weight:700;color:#042a6c">7 714,35</div><div class="t" style="left:776px;top:589px;width:103px;text-align:right;font-size:10.67px;line-height:14px;font-weight:700;color:#042a6c">5 355,98</div><div class="t" style="left:881px;top:589px;width:103px;text-align:right;font-size:10.67px;line-height:14px;font-weight:700;color:#042a6c">1 252,00</div><div class="t" style="left:986px;top:589px;width:103px;text-align:right;font-size:10.67px;line-height:14px;font-weight:700;color:#042a6c">25</div><div class="t" style="left:1091px;top:589px;width:103px;text-align:right;font-size:10.67px;line-height:14px;font-weight:700;color:#042a6c">28</div><div class="t" style="left:1196px;top:589px;width:103px;text-align:right;font-size:10.67px;line-height:14px;font-weight:700;color:#042a6c">4</div><div class="t" style="left:1301px;top:589px;width:103px;text-align:right;font-size:10.67px;line-height:14px;font-weight:700;color:#042a6c">14,29</div><div class="t" style="left:1406px;top:589px;width:103px;text-align:right;font-size:10.67px;line-height:14px;font-weight:700;color:#042a6c">2</div><div class="t" style="left:1511px;top:589px;width:103px;text-align:right;font-size:10.67px;line-height:14px;font-weight:700;color:#042a6c">8</div><div class="a" style="left:42px;top:618px;width:1602px;height:1px;background:#7f8bc4;"></div><div class="t" style="left:251px;top:604px;width:103px;text-align:right;font-size:10.67px;line-height:14px;font-weight:400;color:#333">109 916,00</div><div class="t" style="left:356px;top:604px;width:103px;text-align:right;font-size:10.67px;line-height:14px;font-weight:400;color:#333">7 694,12</div><div class="t" style="left:461px;top:604px;width:103px;text-align:right;font-size:10.67px;line-height:14px;font-weight:400;color:#333">102 221,88</div><div class="t" style="left:566px;top:604px;width:103px;text-align:right;font-size:10.67px;line-height:14px;font-weight:400;color:#333">4 088,88</div><div class="t" style="left:671px;top:604px;width:103px;text-align:right;font-size:10.67px;line-height:14px;font-weight:400;color:#333">7 714,35</div><div class="t" style="left:776px;top:604px;width:103px;text-align:right;font-size:10.67px;line-height:14px;font-weight:400;color:#333">5 355,98</div><div class="t" style="left:881px;top:604px;width:103px;text-align:right;font-size:10.67px;line-height:14px;font-weight:400;color:#333">1 252,00</div><div class="t" style="left:986px;top:604px;width:103px;text-align:right;font-size:10.67px;line-height:14px;font-weight:400;color:#333">25</div><div class="t" style="left:1091px;top:604px;width:103px;text-align:right;font-size:10.67px;line-height:14px;font-weight:400;color:#333">28</div><div class="t" style="left:1196px;top:604px;width:103px;text-align:right;font-size:10.67px;line-height:14px;font-weight:400;color:#333">4</div><div class="t" style="left:1301px;top:604px;width:103px;text-align:right;font-size:10.67px;line-height:14px;font-weight:400;color:#333">14,29</div><div class="t" style="left:1406px;top:604px;width:103px;text-align:right;font-size:10.67px;line-height:14px;font-weight:400;color:#333">2</div><div class="t" style="left:1511px;top:604px;width:103px;text-align:right;font-size:10.67px;line-height:14px;font-weight:400;color:#333">8</div><div class="a" style="left:42px;top:619px;width:1602px;height:14px;background:#dcf0fe;"></div><div class="a" style="left:42px;top:633px;width:1602px;height:1px;background:#7f8bc4;"></div><div class="t" style="left:58px;top:619px;font-size:11px;line-height:14px;font-weight:700;color:#042a6c;letter-spacing:0.22px">Насосы велосипедные</div><div class="t" style="left:251px;top:619px;width:103px;text-align:right;font-size:10.67px;line-height:14px;font-weight:700;color:#042a6c">99 665,00</div><div class="t" style="left:356px;top:619px;width:103px;text-align:right;font-size:10.67px;line-height:14px;font-weight:700;color:#042a6c">6 697,01</div><div class="t" style="left:461px;top:619px;width:103px;text-align:right;font-size:10.67px;line-height:14px;font-weight:700;color:#042a6c">92 967,99</div><div class="t" style="left:566px;top:619px;width:103px;text-align:right;font-size:10.67px;line-height:14px;font-weight:700;color:#042a6c">787,86</div><div class="t" style="left:671px;top:619px;width:103px;text-align:right;font-size:10.67px;line-height:14px;font-weight:700;color:#042a6c">1 896</div><div class="t" style="left:776px;top:619px;width:103px;text-align:right;font-size:10.67px;line-height:14px;font-weight:700;color:#042a6c">5 055,05</div><div class="t" style="left:881px;top:619px;width:103px;text-align:right;font-size:10.67px;line-height:14px;font-weight:700;color:#042a6c">10 707,00</div><div class="t" style="left:986px;top:619px;width:103px;text-align:right;font-size:10.67px;line-height:14px;font-weight:700;color:#042a6c">118</div><div class="t" style="left:1091px;top:619px;width:103px;text-align:right;font-size:10.67px;line-height:14px;font-weight:700;color:#042a6c">96</div><div class="t" style="left:1196px;top:619px;width:103px;text-align:right;font-size:10.67px;line-height:14px;font-weight:700;color:#042a6c">19</div><div class="t" style="left:1301px;top:619px;width:103px;text-align:right;font-size:10.67px;line-height:14px;font-weight:700;color:#042a6c">19,79</div><div class="t" style="left:1406px;top:619px;width:103px;text-align:right;font-size:10.67px;line-height:14px;font-weight:700;color:#042a6c">6</div><div class="t" style="left:1511px;top:619px;width:103px;text-align:right;font-size:10.67px;line-height:14px;font-weight:700;color:#042a6c">5,08</div><div class="a" style="left:42px;top:648px;width:1602px;height:1px;background:#7f8bc4;"></div><div class="t" style="left:251px;top:634px;width:103px;text-align:right;font-size:10.67px;line-height:14px;font-weight:400;color:#333">99 665,00</div><div class="t" style="left:356px;top:634px;width:103px;text-align:right;font-size:10.67px;line-height:14px;font-weight:400;color:#333">6 697,01</div><div class="t" style="left:461px;top:634px;width:103px;text-align:right;font-size:10.67px;line-height:14px;font-weight:400;color:#333">92 967,99</div><div class="t" style="left:566px;top:634px;width:103px;text-align:right;font-size:10.67px;line-height:14px;font-weight:400;color:#333">787,86</div><div class="t" style="left:671px;top:634px;width:103px;text-align:right;font-size:10.67px;line-height:14px;font-weight:400;color:#333">1 896</div><div class="t" style="left:776px;top:634px;width:103px;text-align:right;font-size:10.67px;line-height:14px;font-weight:400;color:#333">5 055,05</div><div class="t" style="left:881px;top:634px;width:103px;text-align:right;font-size:10.67px;line-height:14px;font-weight:400;color:#333">10 707,00</div><div class="t" style="left:986px;top:634px;width:103px;text-align:right;font-size:10.67px;line-height:14px;font-weight:400;color:#333">118</div><div class="t" style="left:1091px;top:634px;width:103px;text-align:right;font-size:10.67px;line-height:14px;font-weight:400;color:#333">96</div><div class="t" style="left:1196px;top:634px;width:103px;text-align:right;font-size:10.67px;line-height:14px;font-weight:400;color:#333">19</div><div class="t" style="left:1301px;top:634px;width:103px;text-align:right;font-size:10.67px;line-height:14px;font-weight:400;color:#333">19,79</div><div class="t" style="left:1406px;top:634px;width:103px;text-align:right;font-size:10.67px;line-height:14px;font-weight:400;color:#333">6</div><div class="t" style="left:1511px;top:634px;width:103px;text-align:right;font-size:10.67px;line-height:14px;font-weight:400;color:#333">5,08</div><div class="a" style="left:42px;top:649px;width:1602px;height:14px;background:#dcf0fe;"></div><div class="a" style="left:42px;top:663px;width:1602px;height:1px;background:#7f8bc4;"></div><div class="t" style="left:58px;top:649px;font-size:11px;line-height:14px;font-weight:700;color:#042a6c;letter-spacing:0.22px">Шкурки для самокатов</div><div class="t" style="left:251px;top:649px;width:103px;text-align:right;font-size:10.67px;line-height:14px;font-weight:700;color:#042a6c">85 430,00</div><div class="t" style="left:356px;top:649px;width:103px;text-align:right;font-size:10.67px;line-height:14px;font-weight:700;color:#042a6c">2 662,5</div><div class="t" style="left:461px;top:649px;width:103px;text-align:right;font-size:10.67px;line-height:14px;font-weight:700;color:#042a6c">82 767,50</div><div class="t" style="left:566px;top:649px;width:103px;text-align:right;font-size:10.67px;line-height:14px;font-weight:700;color:#042a6c">684,03</div><div class="t" style="left:776px;top:649px;width:103px;text-align:right;font-size:10.67px;line-height:14px;font-weight:700;color:#042a6c">4 338,77</div><div class="t" style="left:881px;top:649px;width:103px;text-align:right;font-size:10.67px;line-height:14px;font-weight:700;color:#042a6c">3 213,00</div><div class="t" style="left:986px;top:649px;width:103px;text-align:right;font-size:10.67px;line-height:14px;font-weight:700;color:#042a6c">121</div><div class="t" style="left:1091px;top:649px;width:103px;text-align:right;font-size:10.67px;line-height:14px;font-weight:700;color:#042a6c">95</div><div class="t" style="left:1196px;top:649px;width:103px;text-align:right;font-size:10.67px;line-height:14px;font-weight:700;color:#042a6c">11</div><div class="t" style="left:1301px;top:649px;width:103px;text-align:right;font-size:10.67px;line-height:14px;font-weight:700;color:#042a6c">11,58</div><div class="a" style="left:42px;top:678px;width:1602px;height:1px;background:#7f8bc4;"></div><div class="t" style="left:251px;top:664px;width:103px;text-align:right;font-size:10.67px;line-height:14px;font-weight:400;color:#333">85 430,00</div><div class="t" style="left:356px;top:664px;width:103px;text-align:right;font-size:10.67px;line-height:14px;font-weight:400;color:#333">2 662,5</div><div class="t" style="left:461px;top:664px;width:103px;text-align:right;font-size:10.67px;line-height:14px;font-weight:400;color:#333">82 767,50</div><div class="t" style="left:566px;top:664px;width:103px;text-align:right;font-size:10.67px;line-height:14px;font-weight:400;color:#333">684,03</div><div class="t" style="left:776px;top:664px;width:103px;text-align:right;font-size:10.67px;line-height:14px;font-weight:400;color:#333">4 338,77</div><div class="t" style="left:881px;top:664px;width:103px;text-align:right;font-size:10.67px;line-height:14px;font-weight:400;color:#333">3 213,00</div><div class="t" style="left:986px;top:664px;width:103px;text-align:right;font-size:10.67px;line-height:14px;font-weight:400;color:#333">121</div><div class="t" style="left:1091px;top:664px;width:103px;text-align:right;font-size:10.67px;line-height:14px;font-weight:400;color:#333">95</div><div class="t" style="left:1196px;top:664px;width:103px;text-align:right;font-size:10.67px;line-height:14px;font-weight:400;color:#333">11</div><div class="t" style="left:1301px;top:664px;width:103px;text-align:right;font-size:10.67px;line-height:14px;font-weight:400;color:#333">11,58</div><div class="a" style="left:42px;top:679px;width:1602px;height:14px;background:#dcf0fe;"></div><div class="a" style="left:42px;top:693px;width:1602px;height:1px;background:#7f8bc4;"></div><div class="t" style="left:58px;top:679px;font-size:11px;line-height:14px;font-weight:700;color:#042a6c;letter-spacing:0.22px">Колеса для велосипедов</div><div class="t" style="left:251px;top:679px;width:103px;text-align:right;font-size:10.67px;line-height:14px;font-weight:700;color:#042a6c">79 198,00</div><div class="t" style="left:356px;top:679px;width:103px;text-align:right;font-size:10.67px;line-height:14px;font-weight:700;color:#042a6c">3 939,58</div><div class="t" style="left:461px;top:679px;width:103px;text-align:right;font-size:10.67px;line-height:14px;font-weight:700;color:#042a6c">75 258,42</div><div class="t" style="left:566px;top:679px;width:103px;text-align:right;font-size:10.67px;line-height:14px;font-weight:700;color:#042a6c">2 351,83</div><div class="t" style="left:671px;top:679px;width:103px;text-align:right;font-size:10.67px;line-height:14px;font-weight:700;color:#042a6c">5 022,52</div><div class="t" style="left:776px;top:679px;width:103px;text-align:right;font-size:10.67px;line-height:14px;font-weight:700;color:#042a6c">4 126,44</div><div class="t" style="left:881px;top:679px;width:103px;text-align:right;font-size:10.67px;line-height:14px;font-weight:700;color:#042a6c">5 394,00</div><div class="t" style="left:986px;top:679px;width:103px;text-align:right;font-size:10.67px;line-height:14px;font-weight:700;color:#042a6c">32</div><div class="t" style="left:1091px;top:679px;width:103px;text-align:right;font-size:10.67px;line-height:14px;font-weight:700;color:#042a6c">47</div><div class="t" style="left:1196px;top:679px;width:103px;text-align:right;font-size:10.67px;line-height:14px;font-weight:700;color:#042a6c">11</div><div class="t" style="left:1301px;top:679px;width:103px;text-align:right;font-size:10.67px;line-height:14px;font-weight:700;color:#042a6c">23,4</div><div class="t" style="left:1406px;top:679px;width:103px;text-align:right;font-size:10.67px;line-height:14px;font-weight:700;color:#042a6c">2</div><div class="t" style="left:1511px;top:679px;width:103px;text-align:right;font-size:10.67px;line-height:14px;font-weight:700;color:#042a6c">6,25</div><div class="a" style="left:42px;top:708px;width:1602px;height:1px;background:#7f8bc4;"></div><div class="t" style="left:251px;top:694px;width:103px;text-align:right;font-size:10.67px;line-height:14px;font-weight:400;color:#333">79 198,00</div><div class="t" style="left:356px;top:694px;width:103px;text-align:right;font-size:10.67px;line-height:14px;font-weight:400;color:#333">3 939,58</div><div class="t" style="left:461px;top:694px;width:103px;text-align:right;font-size:10.67px;line-height:14px;font-weight:400;color:#333">75 258,42</div><div class="t" style="left:566px;top:694px;width:103px;text-align:right;font-size:10.67px;line-height:14px;font-weight:400;color:#333">2 351,83</div><div class="t" style="left:671px;top:694px;width:103px;text-align:right;font-size:10.67px;line-height:14px;font-weight:400;color:#333">5 022,52</div><div class="t" style="left:776px;top:694px;width:103px;text-align:right;font-size:10.67px;line-height:14px;font-weight:400;color:#333">4 126,44</div><div class="t" style="left:881px;top:694px;width:103px;text-align:right;font-size:10.67px;line-height:14px;font-weight:400;color:#333">5 394,00</div><div class="t" style="left:986px;top:694px;width:103px;text-align:right;font-size:10.67px;line-height:14px;font-weight:400;color:#333">32</div><div class="t" style="left:1091px;top:694px;width:103px;text-align:right;font-size:10.67px;line-height:14px;font-weight:400;color:#333">47</div><div class="t" style="left:1196px;top:694px;width:103px;text-align:right;font-size:10.67px;line-height:14px;font-weight:400;color:#333">11</div><div class="t" style="left:1301px;top:694px;width:103px;text-align:right;font-size:10.67px;line-height:14px;font-weight:400;color:#333">23,4</div><div class="t" style="left:1406px;top:694px;width:103px;text-align:right;font-size:10.67px;line-height:14px;font-weight:400;color:#333">2</div><div class="t" style="left:1511px;top:694px;width:103px;text-align:right;font-size:10.67px;line-height:14px;font-weight:400;color:#333">6,25</div><div class="a" style="left:42px;top:709px;width:1602px;height:14px;background:#dcf0fe;"></div><div class="a" style="left:42px;top:723px;width:1602px;height:1px;background:#7f8bc4;"></div><div class="t" style="left:58px;top:709px;font-size:11px;line-height:14px;font-weight:700;color:#042a6c;letter-spacing:0.22px">Велоинструменты</div><div class="t" style="left:251px;top:709px;width:103px;text-align:right;font-size:10.67px;line-height:14px;font-weight:700;color:#042a6c">72 986,00</div><div class="t" style="left:356px;top:709px;width:103px;text-align:right;font-size:10.67px;line-height:14px;font-weight:700;color:#042a6c">4 781,63</div><div class="t" style="left:461px;top:709px;width:103px;text-align:right;font-size:10.67px;line-height:14px;font-weight:700;color:#042a6c">68 204,37</div><div class="t" style="left:566px;top:709px;width:103px;text-align:right;font-size:10.67px;line-height:14px;font-weight:700;color:#042a6c">974,35</div><div class="t" style="left:671px;top:709px;width:103px;text-align:right;font-size:10.67px;line-height:14px;font-weight:700;color:#042a6c">1 336,41</div><div class="t" style="left:776px;top:709px;width:103px;text-align:right;font-size:10.67px;line-height:14px;font-weight:700;color:#042a6c">3 691,01</div><div class="t" style="left:881px;top:709px;width:103px;text-align:right;font-size:10.67px;line-height:14px;font-weight:700;color:#042a6c">3 031,00</div><div class="t" style="left:986px;top:709px;width:103px;text-align:right;font-size:10.67px;line-height:14px;font-weight:700;color:#042a6c">70</div><div class="t" style="left:1091px;top:709px;width:103px;text-align:right;font-size:10.67px;line-height:14px;font-weight:700;color:#042a6c">70</div><div class="t" style="left:1196px;top:709px;width:103px;text-align:right;font-size:10.67px;line-height:14px;font-weight:700;color:#042a6c">7</div><div class="t" style="left:1301px;top:709px;width:103px;text-align:right;font-size:10.67px;line-height:14px;font-weight:700;color:#042a6c">10</div><div class="t" style="left:1406px;top:709px;width:103px;text-align:right;font-size:10.67px;line-height:14px;font-weight:700;color:#042a6c">1</div><div class="t" style="left:1511px;top:709px;width:103px;text-align:right;font-size:10.67px;line-height:14px;font-weight:700;color:#042a6c">1,43</div><div class="a" style="left:42px;top:738px;width:1602px;height:1px;background:#7f8bc4;"></div><div class="t" style="left:251px;top:724px;width:103px;text-align:right;font-size:10.67px;line-height:14px;font-weight:400;color:#333">72 986,00</div><div class="t" style="left:356px;top:724px;width:103px;text-align:right;font-size:10.67px;line-height:14px;font-weight:400;color:#333">4 781,63</div><div class="t" style="left:461px;top:724px;width:103px;text-align:right;font-size:10.67px;line-height:14px;font-weight:400;color:#333">68 204,37</div><div class="t" style="left:566px;top:724px;width:103px;text-align:right;font-size:10.67px;line-height:14px;font-weight:400;color:#333">974,35</div><div class="t" style="left:671px;top:724px;width:103px;text-align:right;font-size:10.67px;line-height:14px;font-weight:400;color:#333">1 336,41</div><div class="t" style="left:776px;top:724px;width:103px;text-align:right;font-size:10.67px;line-height:14px;font-weight:400;color:#333">3 691,01</div><div class="t" style="left:881px;top:724px;width:103px;text-align:right;font-size:10.67px;line-height:14px;font-weight:400;color:#333">3 031,00</div><div class="t" style="left:986px;top:724px;width:103px;text-align:right;font-size:10.67px;line-height:14px;font-weight:400;color:#333">70</div><div class="t" style="left:1091px;top:724px;width:103px;text-align:right;font-size:10.67px;line-height:14px;font-weight:400;color:#333">70</div><div class="t" style="left:1196px;top:724px;width:103px;text-align:right;font-size:10.67px;line-height:14px;font-weight:400;color:#333">7</div><div class="t" style="left:1301px;top:724px;width:103px;text-align:right;font-size:10.67px;line-height:14px;font-weight:400;color:#333">10</div><div class="t" style="left:1406px;top:724px;width:103px;text-align:right;font-size:10.67px;line-height:14px;font-weight:400;color:#333">1</div><div class="t" style="left:1511px;top:724px;width:103px;text-align:right;font-size:10.67px;line-height:14px;font-weight:400;color:#333">1,43</div><div class="a" style="left:42px;top:739px;width:1602px;height:14px;background:#dcf0fe;"></div><div class="a" style="left:42px;top:753px;width:1602px;height:1px;background:#7f8bc4;"></div><div class="t" style="left:58px;top:739px;font-size:11px;line-height:14px;font-weight:700;color:#042a6c;letter-spacing:0.22px">Цепи велосипедные</div><div class="t" style="left:251px;top:739px;width:103px;text-align:right;font-size:10.67px;line-height:14px;font-weight:700;color:#042a6c">68 714,00</div><div class="t" style="left:356px;top:739px;width:103px;text-align:right;font-size:10.67px;line-height:14px;font-weight:700;color:#042a6c">5 026,25</div><div class="t" style="left:461px;top:739px;width:103px;text-align:right;font-size:10.67px;line-height:14px;font-weight:700;color:#042a6c">63 687,75</div><div class="t" style="left:566px;top:739px;width:103px;text-align:right;font-size:10.67px;line-height:14px;font-weight:700;color:#042a6c">796,1</div><div class="t" style="left:671px;top:739px;width:103px;text-align:right;font-size:10.67px;line-height:14px;font-weight:700;color:#042a6c">1 774,11</div><div class="t" style="left:776px;top:739px;width:103px;text-align:right;font-size:10.67px;line-height:14px;font-weight:700;color:#042a6c">3 493,88</div><div class="t" style="left:881px;top:739px;width:103px;text-align:right;font-size:10.67px;line-height:14px;font-weight:700;color:#042a6c">3 497,00</div><div class="t" style="left:986px;top:739px;width:103px;text-align:right;font-size:10.67px;line-height:14px;font-weight:700;color:#042a6c">80</div><div class="t" style="left:1091px;top:739px;width:103px;text-align:right;font-size:10.67px;line-height:14px;font-weight:700;color:#042a6c">80</div><div class="t" style="left:1196px;top:739px;width:103px;text-align:right;font-size:10.67px;line-height:14px;font-weight:700;color:#042a6c">9</div><div class="t" style="left:1301px;top:739px;width:103px;text-align:right;font-size:10.67px;line-height:14px;font-weight:700;color:#042a6c">11,25</div><div class="t" style="left:1406px;top:739px;width:103px;text-align:right;font-size:10.67px;line-height:14px;font-weight:700;color:#042a6c">3</div><div class="t" style="left:1511px;top:739px;width:103px;text-align:right;font-size:10.67px;line-height:14px;font-weight:700;color:#042a6c">3,75</div><div class="a" style="left:42px;top:768px;width:1602px;height:1px;background:#7f8bc4;"></div><div class="t" style="left:251px;top:754px;width:103px;text-align:right;font-size:10.67px;line-height:14px;font-weight:400;color:#333">68 714,00</div><div class="t" style="left:356px;top:754px;width:103px;text-align:right;font-size:10.67px;line-height:14px;font-weight:400;color:#333">5 026,25</div><div class="t" style="left:461px;top:754px;width:103px;text-align:right;font-size:10.67px;line-height:14px;font-weight:400;color:#333">63 687,75</div><div class="t" style="left:566px;top:754px;width:103px;text-align:right;font-size:10.67px;line-height:14px;font-weight:400;color:#333">796,1</div><div class="t" style="left:671px;top:754px;width:103px;text-align:right;font-size:10.67px;line-height:14px;font-weight:400;color:#333">1 774,11</div><div class="t" style="left:776px;top:754px;width:103px;text-align:right;font-size:10.67px;line-height:14px;font-weight:400;color:#333">3 493,88</div><div class="t" style="left:881px;top:754px;width:103px;text-align:right;font-size:10.67px;line-height:14px;font-weight:400;color:#333">3 497,00</div><div class="t" style="left:986px;top:754px;width:103px;text-align:right;font-size:10.67px;line-height:14px;font-weight:400;color:#333">80</div><div class="t" style="left:1091px;top:754px;width:103px;text-align:right;font-size:10.67px;line-height:14px;font-weight:400;color:#333">80</div><div class="t" style="left:1196px;top:754px;width:103px;text-align:right;font-size:10.67px;line-height:14px;font-weight:400;color:#333">9</div><div class="t" style="left:1301px;top:754px;width:103px;text-align:right;font-size:10.67px;line-height:14px;font-weight:400;color:#333">11,25</div><div class="t" style="left:1406px;top:754px;width:103px;text-align:right;font-size:10.67px;line-height:14px;font-weight:400;color:#333">3</div><div class="t" style="left:1511px;top:754px;width:103px;text-align:right;font-size:10.67px;line-height:14px;font-weight:400;color:#333">3,75</div><div class="a" style="left:251px;top:154px;width:1px;height:613px;background:#7f8bc4;"></div><div class="a" style="left:356px;top:154px;width:1px;height:613px;background:#7f8bc4;"></div><div class="a" style="left:461px;top:154px;width:1px;height:613px;background:#7f8bc4;"></div><div class="a" style="left:566px;top:154px;width:1px;height:613px;background:#7f8bc4;"></div><div class="a" style="left:671px;top:154px;width:1px;height:613px;background:#7f8bc4;"></div><div class="a" style="left:776px;top:154px;width:1px;height:613px;background:#7f8bc4;"></div><div class="a" style="left:881px;top:154px;width:1px;height:613px;background:#7f8bc4;"></div><div class="a" style="left:986px;top:154px;width:1px;height:613px;background:#7f8bc4;"></div><div class="a" style="left:1091px;top:154px;width:1px;height:613px;background:#7f8bc4;"></div><div class="a" style="left:1196px;top:154px;width:1px;height:613px;background:#7f8bc4;"></div><div class="a" style="left:1301px;top:154px;width:1px;height:613px;background:#7f8bc4;"></div><div class="a" style="left:1406px;top:154px;width:1px;height:613px;background:#7f8bc4;"></div><div class="a" style="left:1511px;top:154px;width:1px;height:613px;background:#7f8bc4;"></div><div class="a" style="left:1616px;top:154px;width:1px;height:613px;background:#7f8bc4;"></div><div class="a" style="left:1721px;top:154px;width:1px;height:613px;background:#7f8bc4;"></div><div class="a" style="left:3px;top:1px;width:11px;height:11px;border:1px solid #a8a8a8;border-radius:2px;background:linear-gradient(#fff,#ececec)"></div><div class="a" style="left:5px;top:6px;width:7px;height:1px;background:#333;"></div><div class="a" style="left:8px;top:12px;width:1px;height:45px;background:#a0a0a0;"></div><div class="a" style="left:8px;top:57px;width:33px;height:1px;background:#a0a0a0;"></div><div class="a" style="left:3px;top:156px;width:11px;height:11px;border:1px solid #a8a8a8;border-radius:2px;background:linear-gradient(#fff,#ececec)"></div><div class="a" style="left:5px;top:161px;width:7px;height:1px;background:#333;"></div><div class="a" style="left:8px;top:167px;width:1px;height:600px;background:#a0a0a0;"></div><div class="a" style="left:16px;top:171px;width:11px;height:11px;border:1px solid #a8a8a8;border-radius:2px;background:linear-gradient(#fff,#ececec)"></div><div class="a" style="left:18px;top:176px;width:7px;height:1px;background:#333;"></div><div class="a" style="left:21px;top:182px;width:1px;height:17px;background:#a0a0a0;"></div><div class="a" style="left:21px;top:198px;width:20px;height:1px;background:#a0a0a0;"></div><div class="a" style="left:16px;top:201px;width:11px;height:11px;border:1px solid #a8a8a8;border-radius:2px;background:linear-gradient(#fff,#ececec)"></div><div class="a" style="left:18px;top:206px;width:7px;height:1px;background:#333;"></div><div class="a" style="left:21px;top:212px;width:1px;height:17px;background:#a0a0a0;"></div><div class="a" style="left:21px;top:228px;width:20px;height:1px;background:#a0a0a0;"></div><div class="a" style="left:16px;top:231px;width:11px;height:11px;border:1px solid #a8a8a8;border-radius:2px;background:linear-gradient(#fff,#ececec)"></div><div class="a" style="left:18px;top:236px;width:7px;height:1px;background:#333;"></div><div class="a" style="left:21px;top:242px;width:1px;height:17px;background:#a0a0a0;"></div><div class="a" style="left:21px;top:258px;width:20px;height:1px;background:#a0a0a0;"></div><div class="a" style="left:16px;top:261px;width:11px;height:11px;border:1px solid #a8a8a8;border-radius:2px;background:linear-gradient(#fff,#ececec)"></div><div class="a" style="left:18px;top:266px;width:7px;height:1px;background:#333;"></div><div class="a" style="left:21px;top:272px;width:1px;height:17px;background:#a0a0a0;"></div><div class="a" style="left:21px;top:288px;width:20px;height:1px;background:#a0a0a0;"></div><div class="a" style="left:16px;top:291px;width:11px;height:11px;border:1px solid #a8a8a8;border-radius:2px;background:linear-gradient(#fff,#ececec)"></div><div class="a" style="left:18px;top:296px;width:7px;height:1px;background:#333;"></div><div class="a" style="left:21px;top:302px;width:1px;height:17px;background:#a0a0a0;"></div><div class="a" style="left:21px;top:318px;width:20px;height:1px;background:#a0a0a0;"></div><div class="a" style="left:16px;top:321px;width:11px;height:11px;border:1px solid #a8a8a8;border-radius:2px;background:linear-gradient(#fff,#ececec)"></div><div class="a" style="left:18px;top:326px;width:7px;height:1px;background:#333;"></div><div class="a" style="left:21px;top:332px;width:1px;height:17px;background:#a0a0a0;"></div><div class="a" style="left:21px;top:348px;width:20px;height:1px;background:#a0a0a0;"></div><div class="a" style="left:16px;top:351px;width:11px;height:11px;border:1px solid #a8a8a8;border-radius:2px;background:linear-gradient(#fff,#ececec)"></div><div class="a" style="left:18px;top:356px;width:7px;height:1px;background:#333;"></div><div class="a" style="left:21px;top:362px;width:1px;height:17px;background:#a0a0a0;"></div><div class="a" style="left:21px;top:378px;width:20px;height:1px;background:#a0a0a0;"></div><div class="a" style="left:16px;top:381px;width:11px;height:11px;border:1px solid #a8a8a8;border-radius:2px;background:linear-gradient(#fff,#ececec)"></div><div class="a" style="left:18px;top:386px;width:7px;height:1px;background:#333;"></div><div class="a" style="left:21px;top:392px;width:1px;height:17px;background:#a0a0a0;"></div><div class="a" style="left:21px;top:408px;width:20px;height:1px;background:#a0a0a0;"></div><div class="a" style="left:16px;top:411px;width:11px;height:11px;border:1px solid #a8a8a8;border-radius:2px;background:linear-gradient(#fff,#ececec)"></div><div class="a" style="left:18px;top:416px;width:7px;height:1px;background:#333;"></div><div class="a" style="left:21px;top:422px;width:1px;height:17px;background:#a0a0a0;"></div><div class="a" style="left:21px;top:438px;width:20px;height:1px;background:#a0a0a0;"></div><div class="a" style="left:16px;top:441px;width:11px;height:11px;border:1px solid #a8a8a8;border-radius:2px;background:linear-gradient(#fff,#ececec)"></div><div class="a" style="left:18px;top:446px;width:7px;height:1px;background:#333;"></div><div class="a" style="left:21px;top:452px;width:1px;height:17px;background:#a0a0a0;"></div><div class="a" style="left:21px;top:468px;width:20px;height:1px;background:#a0a0a0;"></div><div class="a" style="left:16px;top:471px;width:11px;height:11px;border:1px solid #a8a8a8;border-radius:2px;background:linear-gradient(#fff,#ececec)"></div><div class="a" style="left:18px;top:476px;width:7px;height:1px;background:#333;"></div><div class="a" style="left:21px;top:482px;width:1px;height:17px;background:#a0a0a0;"></div><div class="a" style="left:21px;top:498px;width:20px;height:1px;background:#a0a0a0;"></div><div class="a" style="left:16px;top:501px;width:11px;height:11px;border:1px solid #a8a8a8;border-radius:2px;background:linear-gradient(#fff,#ececec)"></div><div class="a" style="left:18px;top:506px;width:7px;height:1px;background:#333;"></div><div class="a" style="left:21px;top:512px;width:1px;height:17px;background:#a0a0a0;"></div><div class="a" style="left:21px;top:528px;width:20px;height:1px;background:#a0a0a0;"></div><div class="a" style="left:16px;top:531px;width:11px;height:11px;border:1px solid #a8a8a8;border-radius:2px;background:linear-gradient(#fff,#ececec)"></div><div class="a" style="left:18px;top:536px;width:7px;height:1px;background:#333;"></div><div class="a" style="left:21px;top:542px;width:1px;height:17px;background:#a0a0a0;"></div><div class="a" style="left:21px;top:558px;width:20px;height:1px;background:#a0a0a0;"></div><div class="a" style="left:16px;top:561px;width:11px;height:11px;border:1px solid #a8a8a8;border-radius:2px;background:linear-gradient(#fff,#ececec)"></div><div class="a" style="left:18px;top:566px;width:7px;height:1px;background:#333;"></div><div class="a" style="left:21px;top:572px;width:1px;height:17px;background:#a0a0a0;"></div><div class="a" style="left:21px;top:588px;width:20px;height:1px;background:#a0a0a0;"></div><div class="a" style="left:16px;top:591px;width:11px;height:11px;border:1px solid #a8a8a8;border-radius:2px;background:linear-gradient(#fff,#ececec)"></div><div class="a" style="left:18px;top:596px;width:7px;height:1px;background:#333;"></div><div class="a" style="left:21px;top:602px;width:1px;height:17px;background:#a0a0a0;"></div><div class="a" style="left:21px;top:618px;width:20px;height:1px;background:#a0a0a0;"></div><div class="a" style="left:16px;top:621px;width:11px;height:11px;border:1px solid #a8a8a8;border-radius:2px;background:linear-gradient(#fff,#ececec)"></div><div class="a" style="left:18px;top:626px;width:7px;height:1px;background:#333;"></div><div class="a" style="left:21px;top:632px;width:1px;height:17px;background:#a0a0a0;"></div><div class="a" style="left:21px;top:648px;width:20px;height:1px;background:#a0a0a0;"></div><div class="a" style="left:16px;top:651px;width:11px;height:11px;border:1px solid #a8a8a8;border-radius:2px;background:linear-gradient(#fff,#ececec)"></div><div class="a" style="left:18px;top:656px;width:7px;height:1px;background:#333;"></div><div class="a" style="left:21px;top:662px;width:1px;height:17px;background:#a0a0a0;"></div><div class="a" style="left:21px;top:678px;width:20px;height:1px;background:#a0a0a0;"></div><div class="a" style="left:16px;top:681px;width:11px;height:11px;border:1px solid #a8a8a8;border-radius:2px;background:linear-gradient(#fff,#ececec)"></div><div class="a" style="left:18px;top:686px;width:7px;height:1px;background:#333;"></div><div class="a" style="left:21px;top:692px;width:1px;height:17px;background:#a0a0a0;"></div><div class="a" style="left:21px;top:708px;width:20px;height:1px;background:#a0a0a0;"></div><div class="a" style="left:16px;top:711px;width:11px;height:11px;border:1px solid #a8a8a8;border-radius:2px;background:linear-gradient(#fff,#ececec)"></div><div class="a" style="left:18px;top:716px;width:7px;height:1px;background:#333;"></div><div class="a" style="left:21px;top:722px;width:1px;height:17px;background:#a0a0a0;"></div><div class="a" style="left:21px;top:738px;width:20px;height:1px;background:#a0a0a0;"></div><div class="a" style="left:16px;top:741px;width:11px;height:11px;border:1px solid #a8a8a8;border-radius:2px;background:linear-gradient(#fff,#ececec)"></div><div class="a" style="left:18px;top:746px;width:7px;height:1px;background:#333;"></div><div class="a" style="left:21px;top:752px;width:1px;height:617px;background:#a0a0a0;"></div></div><div class="a" style="left:1889px;top:269px;width:8px;height:721px;background:#d6d6d6;border-radius:4px"></div><div class="a" style="left:1889px;top:269px;width:8px;height:70px;background:#9c9c9c;border-radius:4px"></div><div class="a" style="left:265px;top:1016px;width:1598px;height:8px;background:#d6d6d6;border-radius:4px"></div><div class="a" style="left:265px;top:1016px;width:1435px;height:8px;background:#9c9c9c;border-radius:4px"></div><svg class="a" style="left:1890px;top:255px" width="6" height="4" viewBox="0 0 6 4"><path d="M0 4 L3 0 L6 4z" fill="#c4c4c4"/></svg><svg class="a" style="left:1890px;top:1000px" width="6" height="4" viewBox="0 0 6 4"><path d="M0 0 L3 4 L6 0z" fill="#555"/></svg><svg class="a" style="left:251px;top:1017px" width="4" height="6" viewBox="0 0 4 6"><path d="M4 0 L0 3 L4 6z" fill="#c4c4c4"/></svg><svg class="a" style="left:1873px;top:1017px" width="4" height="6" viewBox="0 0 4 6"><path d="M0 0 L4 3 L0 6z" fill="#555"/></svg></body></html>
